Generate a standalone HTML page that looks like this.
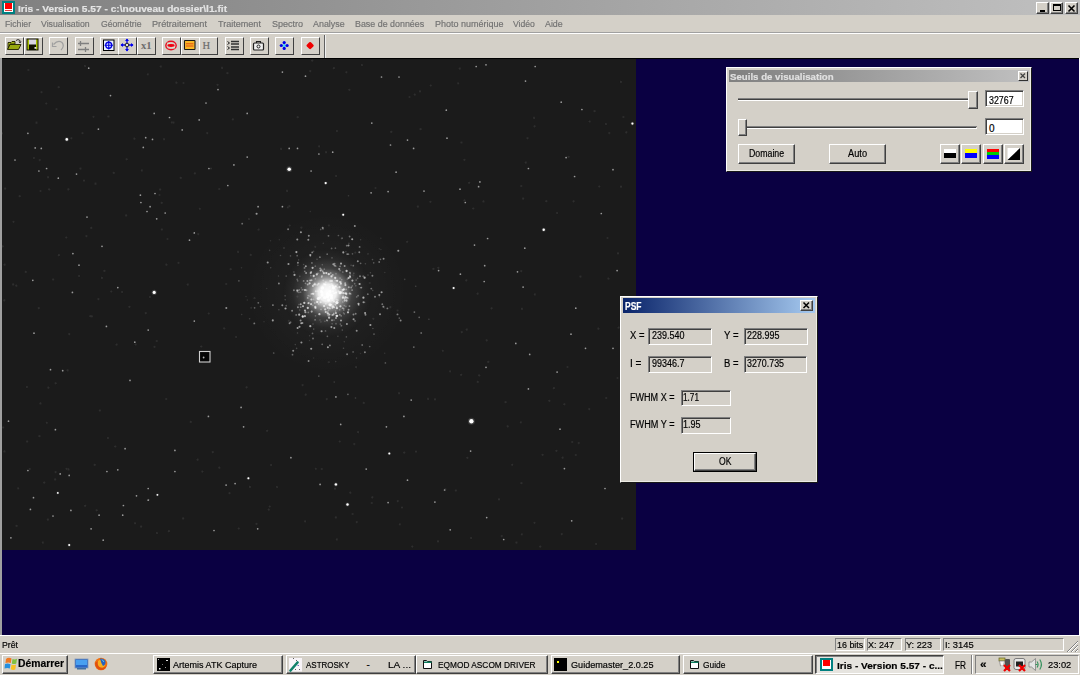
<!DOCTYPE html>
<html><head><meta charset="utf-8"><style>
*{margin:0;padding:0;box-sizing:border-box}
html,body{width:1080px;height:675px;overflow:hidden;background:#d4d0c8;font-family:"Liberation Sans",sans-serif;font-size:10px;position:relative;color:#000}
div,span,svg{position:absolute}
span{white-space:nowrap;line-height:normal;transform-origin:0 0;-webkit-text-stroke:0.18px currentColor}
.raised{background:#d4d0c8;border:1px solid;border-color:#fff #404040 #404040 #fff;box-shadow:inset -1px -1px 0 #808080}
.raised2{background:#d4d0c8;border:1px solid;border-color:#d4d0c8 #404040 #404040 #d4d0c8;box-shadow:inset 1px 1px 0 #fff,inset -1px -1px 0 #808080}
.sunken{border:1px solid;border-color:#808080 #fff #fff #808080;box-shadow:inset 1px 1px 0 #404040,inset -1px -1px 0 #d4d0c8}
.tbtn{background:#d4d0c8;border:1px solid;border-color:#fff #404040 #404040 #fff}
.dlgf{background:#d4d0c8;border:1px solid;border-color:#fff #181818 #181818 #fff;box-shadow:inset -1px -1px 0 #ecebe4}
.thin{border:1px solid;border-color:#808080 #fff #fff #808080}
</style></head><body>
<div style="left:0;top:0;width:1080px;height:15px;background:linear-gradient(to right,#808080,#c0c0c0)"></div>
<div style="left:2px;top:1px;width:13px;height:13px;background:#008080"></div>
<div style="left:4px;top:3px;width:9px;height:9px;background:#fff"></div>
<div style="left:5px;top:3px;width:7px;height:6px;background:#f00"></div>
<div style="left:5px;top:10px;width:7px;height:1px;background:#e04040"></div>
<span style="left:17.50px;top:2.86px;font-size:9.5px;font-weight:bold;color:#e4e4e4;transform:scaleX(1.070);">Iris - Version 5.57 - c:\nouveau dossier\l1.fit</span>
<div class="raised" style="left:1036px;top:2px;width:13px;height:12px"></div>
<div class="raised" style="left:1050px;top:2px;width:13px;height:12px"></div>
<div class="raised" style="left:1065px;top:2px;width:13px;height:12px"></div>
<div style="left:1040px;top:10px;width:5px;height:2px;background:#000"></div>
<div style="left:1053px;top:4px;width:8px;height:7px;border:1px solid #000;border-top-width:2px"></div>
<svg style="left:1065px;top:2px" width="13" height="12" viewBox="0 0 13 12"><path d="M3.5 3.5L9.5 9.5M9.5 3.5L3.5 9.5" stroke="#000" stroke-width="1.6"/></svg>
<span style="left:4.70px;top:18.37px;font-size:9.6px;color:#727272;transform:scaleX(0.906);">Fichier</span>
<span style="left:41.30px;top:18.37px;font-size:9.6px;color:#727272;transform:scaleX(0.907);">Visualisation</span>
<span style="left:100.80px;top:18.37px;font-size:9.6px;color:#727272;transform:scaleX(0.903);">Géométrie</span>
<span style="left:151.70px;top:18.37px;font-size:9.6px;color:#727272;transform:scaleX(0.954);">Prétraitement</span>
<span style="left:218.30px;top:18.37px;font-size:9.6px;color:#727272;transform:scaleX(0.943);">Traitement</span>
<span style="left:271.70px;top:18.37px;font-size:9.6px;color:#727272;transform:scaleX(0.940);">Spectro</span>
<span style="left:313.30px;top:18.37px;font-size:9.6px;color:#727272;transform:scaleX(0.928);">Analyse</span>
<span style="left:355.30px;top:18.37px;font-size:9.6px;color:#727272;transform:scaleX(0.926);">Base de données</span>
<span style="left:434.50px;top:18.37px;font-size:9.6px;color:#727272;transform:scaleX(0.936);">Photo numérique</span>
<span style="left:512.90px;top:18.37px;font-size:9.6px;color:#727272;transform:scaleX(0.898);">Vidéo</span>
<span style="left:544.80px;top:18.37px;font-size:9.6px;color:#727272;transform:scaleX(0.922);">Aide</span>
<div style="left:0;top:32px;width:1080px;height:1px;background:#a0a0a0"></div>
<div style="left:0;top:33px;width:1080px;height:1px;background:#fff"></div>
<div class="tbtn" style="left:5px;top:37px;width:19px;height:18px"></div>
<div class="tbtn" style="left:24px;top:37px;width:19px;height:18px"></div>
<div class="tbtn" style="left:49px;top:37px;width:19px;height:18px"></div>
<div class="tbtn" style="left:75px;top:37px;width:19px;height:18px"></div>
<div class="tbtn" style="left:100px;top:37px;width:19px;height:18px"></div>
<div class="tbtn" style="left:118px;top:37px;width:19px;height:18px"></div>
<div class="tbtn" style="left:137px;top:37px;width:19px;height:18px"></div>
<div class="tbtn" style="left:162px;top:37px;width:19px;height:18px"></div>
<div class="tbtn" style="left:181px;top:37px;width:19px;height:18px"></div>
<div class="tbtn" style="left:199px;top:37px;width:19px;height:18px"></div>
<div class="tbtn" style="left:225px;top:37px;width:19px;height:18px"></div>
<div class="tbtn" style="left:250px;top:37px;width:19px;height:18px"></div>
<div class="tbtn" style="left:275px;top:37px;width:19px;height:18px"></div>
<div class="tbtn" style="left:301px;top:37px;width:19px;height:18px"></div>
<div style="left:324px;top:35px;width:1px;height:23px;background:#606060"></div>
<div style="left:325px;top:35px;width:1px;height:23px;background:#f0f0f0"></div>
<svg style="left:5px;top:36px" width="19" height="19" viewBox="0 0 19 19"><path d="M3 6.5H6L7 5.5H10V8H5L3 13Z" fill="#a8b818" stroke="#202000" stroke-width="0.9"/><path d="M5 8.5H16L13.5 13.5H2.5Z" fill="#98a810" stroke="#202000" stroke-width="0.9"/><path d="M11 4.5Q13 2.5 15 4.5L15 6.5" fill="none" stroke="#202020" stroke-width="0.9"/><path d="M14 5.5L15 7L16 5.5" fill="none" stroke="#202020" stroke-width="0.8"/></svg>
<svg style="left:24px;top:36px" width="19" height="19" viewBox="0 0 19 19"><rect x="2.5" y="2.5" width="12" height="12" fill="#101000"/><rect x="3.5" y="3.5" width="1.5" height="10" fill="#a8c000"/><rect x="12" y="3.5" width="1.5" height="10" fill="#a8c000"/><rect x="5" y="3.5" width="7" height="5" fill="#d8d4e0"/><rect x="10.5" y="11" width="1.8" height="1.8" fill="#e8e8e8"/></svg>
<svg style="left:49px;top:36px" width="19" height="19" viewBox="0 0 19 19"><path d="M4.5 8.5Q9 3.5 13 6.5Q16 10 12 14" fill="none" stroke="#a0a0a0" stroke-width="1.2"/><path d="M3.5 6.5V10.5H7.5" fill="none" stroke="#a0a0a0" stroke-width="1.2"/></svg>
<svg style="left:75px;top:36px" width="19" height="19" viewBox="0 0 19 19"><path d="M3 7.5H14M3 13.5H14M5.5 5V10M10.5 11V16" stroke="#808080" stroke-width="1.3"/></svg>
<svg style="left:100px;top:36px" width="19" height="19" viewBox="0 0 19 19"><rect x="3.5" y="4" width="10.5" height="10.5" fill="#e8f0ff" stroke="#000" stroke-width="1"/><circle cx="8.75" cy="9.25" r="3" fill="none" stroke="#0000e0" stroke-width="1.3"/><path d="M4.5 9.25H13M8.75 5V13.5" stroke="#0000e0" stroke-width="1.1"/></svg>
<svg style="left:118px;top:36px" width="19" height="19" viewBox="0 0 19 19"><path d="M9 3V15M3 9H15" stroke="#0000f0" stroke-width="1.3"/><path d="M9 2.5L7 5H11ZM9 15.5L7 13H11ZM2.5 9L5 7V11ZM15.5 9L13 7V11Z" fill="#0000f0"/><circle cx="9" cy="9" r="1.8" fill="#e0e0e0" stroke="#202020" stroke-width="1"/></svg>
<svg style="left:137px;top:36px" width="19" height="19" viewBox="0 0 19 19"><text x="4" y="12.8" font-family="Liberation Serif" font-size="10.5" font-weight="bold" fill="#6c6c6c">x1</text></svg>
<svg style="left:162px;top:37px" width="19" height="18" viewBox="0 0 19 18"><ellipse cx="9" cy="8.5" rx="5.2" ry="4.3" fill="none" stroke="#e81020" stroke-width="1.4"/><ellipse cx="9" cy="8.5" rx="3.6" ry="1.4" fill="#f00010"/><path d="M5 6.2H8M10 10.8H13" stroke="#d8f0d8" stroke-width="1"/></svg>
<svg style="left:181px;top:36px" width="19" height="19" viewBox="0 0 19 19"><rect x="3.5" y="4.5" width="10.5" height="9" rx="0.6" fill="#f8b828" stroke="#181818" stroke-width="1.1"/><path d="M5 7.8H12.5M5 10H12.5" stroke="#e04010" stroke-width="0.9"/></svg>
<svg style="left:199px;top:36px" width="19" height="19" viewBox="0 0 19 19"><text x="3.5" y="12.8" font-family="Liberation Serif" font-size="10.5" fill="#6c6c6c" stroke="#6c6c6c" stroke-width="0.2">H</text></svg>
<svg style="left:225px;top:36px" width="19" height="19" viewBox="0 0 19 19"><path d="M2.5 5.5L4.5 7L2.5 8.5M2.5 10.5L4.5 12L2.5 13.5" fill="none" stroke="#202020" stroke-width="1"/><path d="M6 5.5H14M6 8H14M6 11H14M6 13.5H14" stroke="#303030" stroke-width="1.3"/></svg>
<svg style="left:250px;top:36px" width="19" height="19" viewBox="0 0 19 19"><rect x="3.5" y="7" width="10" height="7" rx="1" fill="#f0f0f0" stroke="#202020" stroke-width="1.2"/><path d="M6.5 7V5.5H10.5V7" fill="none" stroke="#202020" stroke-width="1.1"/><circle cx="8.5" cy="10.5" r="1.5" fill="none" stroke="#202020" stroke-width="1"/></svg>
<svg style="left:275px;top:36px" width="19" height="19" viewBox="0 0 19 19"><circle cx="9.2" cy="9.5" r="1.6" fill="#40e0f0"/><circle cx="9.2" cy="6.6" r="1.6" fill="#0000e8"/><circle cx="9.2" cy="12.4" r="1.6" fill="#0000e8"/><circle cx="6.3" cy="9.5" r="1.6" fill="#0000e8"/><circle cx="12.1" cy="9.5" r="1.6" fill="#0000e8"/></svg>
<svg style="left:301px;top:36px" width="19" height="19" viewBox="0 0 19 19"><rect x="6.2" y="6.7" width="5.8" height="5.8" rx="1.2" transform="rotate(45 9.1 9.6)" fill="#f00000"/></svg>
<div style="left:0;top:58px;width:2px;height:577px;background:#a0a0a0"></div>
<div style="left:2px;top:58px;width:1077px;height:577px;background:#0a0042"></div>
<div style="left:1079px;top:58px;width:1px;height:577px;background:#fff"></div>
<div style="left:2px;top:58px;width:1077px;height:1px;background:#000"></div>
<svg style="left:2px;top:59px" width="634" height="491" viewBox="0 0 634 491"><defs><radialGradient id="cg"><stop offset="0" stop-color="#fff" stop-opacity="1"/><stop offset="0.2" stop-color="#fff" stop-opacity="0.93"/><stop offset="0.36" stop-color="#fff" stop-opacity="0.48"/><stop offset="0.56" stop-color="#fff" stop-opacity="0.14"/><stop offset="0.8" stop-color="#fff" stop-opacity="0.03"/><stop offset="1" stop-color="#fff" stop-opacity="0"/></radialGradient><radialGradient id="cg2"><stop offset="0" stop-color="#fff" stop-opacity="0.045"/><stop offset="0.5" stop-color="#fff" stop-opacity="0.02"/><stop offset="1" stop-color="#fff" stop-opacity="0"/></radialGradient><filter id="bl" x="-5%" y="-5%" width="110%" height="110%"><feGaussianBlur stdDeviation="0.5"/></filter></defs><rect width="634" height="491" fill="#1b1b1b"/><g filter="url(#bl)"><circle cx="205.3" cy="74.1" r="1.1" fill="#2e2e2e"/><circle cx="412.7" cy="35.6" r="1.1" fill="#2e2e2e"/><circle cx="339.7" cy="179.6" r="1.1" fill="#2e2e2e"/><circle cx="36.8" cy="249.2" r="1.1" fill="#2e2e2e"/><circle cx="23.8" cy="212.9" r="1.1" fill="#2e2e2e"/><circle cx="44.3" cy="44.5" r="1.1" fill="#2e2e2e"/><circle cx="269.1" cy="406.0" r="1.1" fill="#2e2e2e"/><circle cx="78.5" cy="109.6" r="1.1" fill="#2e2e2e"/><circle cx="397.8" cy="465.3" r="1.1" fill="#2e2e2e"/><circle cx="365.9" cy="194.8" r="1.1" fill="#2e2e2e"/><circle cx="618.9" cy="22.9" r="1.1" fill="#2e2e2e"/><circle cx="544.3" cy="142.2" r="1.1" fill="#2e2e2e"/><circle cx="91.5" cy="57.8" r="1.1" fill="#2e2e2e"/><circle cx="195.6" cy="400.7" r="1.1" fill="#2e2e2e"/><circle cx="114.6" cy="285.6" r="1.1" fill="#2e2e2e"/><circle cx="405.1" cy="182.8" r="1.1" fill="#2e2e2e"/><circle cx="347.3" cy="30.8" r="1.1" fill="#2e2e2e"/><circle cx="37.8" cy="101.1" r="1.1" fill="#2e2e2e"/><circle cx="431.4" cy="209.9" r="1.1" fill="#2e2e2e"/><circle cx="199.2" cy="287.5" r="1.1" fill="#2e2e2e"/><circle cx="287.3" cy="147.2" r="1.1" fill="#2e2e2e"/><circle cx="503.6" cy="343.2" r="1.1" fill="#2e2e2e"/><circle cx="154.8" cy="282.0" r="1.1" fill="#2e2e2e"/><circle cx="333.0" cy="429.7" r="1.1" fill="#2e2e2e"/><circle cx="462.5" cy="141.4" r="1.1" fill="#2e2e2e"/><circle cx="621.4" cy="58.0" r="1.1" fill="#2e2e2e"/><circle cx="265.1" cy="371.8" r="1.1" fill="#2e2e2e"/><circle cx="96.4" cy="240.1" r="1.1" fill="#2e2e2e"/><circle cx="24.9" cy="328.1" r="1.1" fill="#2e2e2e"/><circle cx="484.7" cy="281.4" r="1.1" fill="#2e2e2e"/><circle cx="555.1" cy="154.1" r="1.1" fill="#2e2e2e"/><circle cx="440.8" cy="291.8" r="1.1" fill="#2e2e2e"/><circle cx="367.7" cy="224.0" r="1.1" fill="#2e2e2e"/><circle cx="532.5" cy="463.8" r="1.1" fill="#2e2e2e"/><circle cx="300.6" cy="326.1" r="1.1" fill="#2e2e2e"/><circle cx="38.5" cy="344.4" r="1.1" fill="#2e2e2e"/><circle cx="410.3" cy="487.6" r="1.1" fill="#2e2e2e"/><circle cx="521.1" cy="139.7" r="1.1" fill="#2e2e2e"/><circle cx="244.6" cy="328.3" r="1.1" fill="#2e2e2e"/><circle cx="14.3" cy="226.7" r="1.1" fill="#2e2e2e"/><circle cx="106.5" cy="57.5" r="1.1" fill="#2e2e2e"/><circle cx="37.4" cy="377.2" r="1.1" fill="#2e2e2e"/><circle cx="82.0" cy="121.6" r="1.1" fill="#2e2e2e"/><circle cx="247.9" cy="427.9" r="1.1" fill="#2e2e2e"/><circle cx="51.1" cy="220.6" r="1.1" fill="#2e2e2e"/><circle cx="348.3" cy="433.7" r="1.1" fill="#2e2e2e"/><circle cx="519.4" cy="424.2" r="1.1" fill="#2e2e2e"/><circle cx="176.5" cy="203.9" r="1.1" fill="#2e2e2e"/><circle cx="227.5" cy="434.1" r="1.1" fill="#2e2e2e"/><circle cx="607.2" cy="74.1" r="1.1" fill="#2e2e2e"/><circle cx="111.7" cy="113.9" r="1.1" fill="#2e2e2e"/><circle cx="147.9" cy="238.1" r="1.1" fill="#2e2e2e"/><circle cx="373.5" cy="129.0" r="1.1" fill="#2e2e2e"/><circle cx="2.6" cy="205.7" r="1.1" fill="#2e2e2e"/><circle cx="234.1" cy="278.1" r="1.1" fill="#2e2e2e"/><circle cx="604.3" cy="339.0" r="1.1" fill="#2e2e2e"/><circle cx="326.8" cy="303.2" r="1.1" fill="#2e2e2e"/><circle cx="428.7" cy="26.5" r="1.1" fill="#2e2e2e"/><circle cx="570.3" cy="383.0" r="1.1" fill="#2e2e2e"/><circle cx="554.4" cy="391.8" r="1.1" fill="#2e2e2e"/><circle cx="248.8" cy="195.9" r="1.1" fill="#2e2e2e"/><circle cx="65.6" cy="311.4" r="1.1" fill="#2e2e2e"/><circle cx="39.5" cy="33.1" r="1.1" fill="#2e2e2e"/><circle cx="132.4" cy="79.7" r="1.1" fill="#2e2e2e"/><circle cx="215.6" cy="25.8" r="1.1" fill="#2e2e2e"/><circle cx="0.1" cy="74.3" r="1.1" fill="#2e2e2e"/><circle cx="64.3" cy="178.5" r="1.1" fill="#2e2e2e"/><circle cx="16.2" cy="429.3" r="1.1" fill="#2e2e2e"/><circle cx="389.3" cy="72.9" r="1.1" fill="#2e2e2e"/><circle cx="159.9" cy="170.6" r="1.1" fill="#2e2e2e"/><circle cx="230.9" cy="60.3" r="1.1" fill="#2e2e2e"/><circle cx="538.2" cy="487.6" r="1.1" fill="#2e2e2e"/><circle cx="295.4" cy="237.6" r="1.1" fill="#2e2e2e"/><circle cx="54.5" cy="50.2" r="1.1" fill="#2e2e2e"/><circle cx="217.2" cy="130.0" r="1.1" fill="#2e2e2e"/><circle cx="525.5" cy="79.3" r="1.1" fill="#2e2e2e"/><circle cx="14.6" cy="466.9" r="1.1" fill="#2e2e2e"/><circle cx="334.9" cy="72.0" r="1.1" fill="#2e2e2e"/><circle cx="344.4" cy="13.3" r="1.1" fill="#2e2e2e"/><circle cx="334.8" cy="480.4" r="1.1" fill="#2e2e2e"/><circle cx="547.3" cy="341.8" r="1.1" fill="#2e2e2e"/><circle cx="165.5" cy="180.0" r="1.1" fill="#2e2e2e"/><circle cx="105.9" cy="379.0" r="1.1" fill="#2e2e2e"/><circle cx="337.7" cy="382.5" r="1.1" fill="#2e2e2e"/><circle cx="209.0" cy="109.5" r="1.1" fill="#2e2e2e"/><circle cx="514.5" cy="483.6" r="1.1" fill="#2e2e2e"/><circle cx="540.6" cy="395.8" r="1.1" fill="#2e2e2e"/><circle cx="518.8" cy="363.3" r="1.1" fill="#2e2e2e"/><circle cx="143.8" cy="254.2" r="1.1" fill="#2e2e2e"/><circle cx="225.4" cy="14.2" r="1.1" fill="#2e2e2e"/><circle cx="17.7" cy="137.2" r="1.1" fill="#2e2e2e"/><circle cx="164.3" cy="340.0" r="1.1" fill="#2e2e2e"/><circle cx="606.4" cy="219.6" r="1.1" fill="#2e2e2e"/><circle cx="594.1" cy="485.1" r="1.1" fill="#2e2e2e"/><circle cx="605.5" cy="179.0" r="1.1" fill="#2e2e2e"/><circle cx="139.8" cy="111.4" r="1.1" fill="#2e2e2e"/><circle cx="124.7" cy="100.3" r="1.1" fill="#2e2e2e"/><circle cx="395.7" cy="442.1" r="1.1" fill="#2e2e2e"/><circle cx="532.8" cy="235.4" r="1.1" fill="#2e2e2e"/><circle cx="414.0" cy="392.6" r="1.1" fill="#2e2e2e"/><circle cx="53.7" cy="324.3" r="1.1" fill="#2e2e2e"/><circle cx="576.8" cy="384.1" r="1.1" fill="#2e2e2e"/><circle cx="475.6" cy="234.7" r="1.1" fill="#2e2e2e"/><circle cx="113.2" cy="387.5" r="1.1" fill="#2e2e2e"/><circle cx="210.8" cy="393.2" r="1.1" fill="#2e2e2e"/><circle cx="616.0" cy="194.4" r="1.1" fill="#2e2e2e"/><circle cx="254.5" cy="464.9" r="1.1" fill="#2e2e2e"/><circle cx="459.5" cy="83.5" r="1.1" fill="#2e2e2e"/><circle cx="80.5" cy="74.2" r="1.1" fill="#2e2e2e"/><circle cx="573.7" cy="396.0" r="1.1" fill="#2e2e2e"/><circle cx="92.7" cy="405.8" r="1.1" fill="#2e2e2e"/><circle cx="621.5" cy="322.7" r="1.1" fill="#2e2e2e"/><circle cx="222.2" cy="269.4" r="1.1" fill="#2e2e2e"/><circle cx="83.0" cy="7.0" r="1.1" fill="#2e2e2e"/><circle cx="615.5" cy="319.0" r="1.1" fill="#2e2e2e"/><circle cx="333.9" cy="458.4" r="1.1" fill="#2e2e2e"/><circle cx="275.0" cy="428.0" r="1.1" fill="#2e2e2e"/><circle cx="523.8" cy="103.6" r="1.1" fill="#2e2e2e"/><circle cx="159.7" cy="143.8" r="1.1" fill="#2e2e2e"/><circle cx="152.5" cy="287.9" r="1.1" fill="#2e2e2e"/><circle cx="164.4" cy="205.7" r="1.1" fill="#2e2e2e"/><circle cx="83.1" cy="446.8" r="1.1" fill="#2e2e2e"/><circle cx="224.3" cy="225.0" r="1.1" fill="#2e2e2e"/><circle cx="369.8" cy="444.0" r="1.1" fill="#2e2e2e"/><circle cx="266.7" cy="450.6" r="1.1" fill="#2e2e2e"/><circle cx="318.0" cy="261.1" r="1.1" fill="#2e2e2e"/><circle cx="331.9" cy="9.2" r="1.1" fill="#2e2e2e"/><circle cx="279.0" cy="89.9" r="1.1" fill="#2e2e2e"/><circle cx="2.5" cy="392.4" r="1.1" fill="#2e2e2e"/><circle cx="109.3" cy="232.5" r="1.1" fill="#2e2e2e"/><circle cx="459.8" cy="273.2" r="1.1" fill="#2e2e2e"/><circle cx="206.7" cy="254.5" r="1.1" fill="#2e2e2e"/><circle cx="352.2" cy="385.1" r="1.1" fill="#2e2e2e"/><circle cx="67.3" cy="275.1" r="1.1" fill="#2e2e2e"/><circle cx="157.5" cy="136.0" r="1.1" fill="#2e2e2e"/><circle cx="489.6" cy="249.3" r="1.1" fill="#2e2e2e"/><circle cx="356.1" cy="373.2" r="1.1" fill="#2e2e2e"/><circle cx="578.5" cy="217.6" r="1.1" fill="#2e2e2e"/><circle cx="388.3" cy="248.2" r="1.1" fill="#2e2e2e"/><circle cx="324.7" cy="340.1" r="1.1" fill="#2e2e2e"/><circle cx="286.8" cy="261.8" r="1.1" fill="#2e2e2e"/><circle cx="303.1" cy="462.3" r="1.1" fill="#2e2e2e"/><circle cx="443.3" cy="430.4" r="1.1" fill="#2e2e2e"/><circle cx="597.3" cy="127.5" r="1.1" fill="#2e2e2e"/><circle cx="354.7" cy="463.1" r="1.1" fill="#2e2e2e"/><circle cx="532.6" cy="67.3" r="1.1" fill="#2e2e2e"/><circle cx="77.1" cy="217.1" r="1.1" fill="#2e2e2e"/><circle cx="46.0" cy="118.2" r="1.1" fill="#2e2e2e"/><circle cx="46.4" cy="328.7" r="1.1" fill="#2e2e2e"/><circle cx="497.0" cy="440.4" r="1.1" fill="#2e2e2e"/><circle cx="97.9" cy="351.6" r="1.1" fill="#2e2e2e"/><circle cx="418.6" cy="70.2" r="1.1" fill="#2e2e2e"/><circle cx="559.7" cy="475.1" r="1.1" fill="#2e2e2e"/><circle cx="139.2" cy="467.7" r="1.1" fill="#2e2e2e"/><circle cx="252.5" cy="239.2" r="1.1" fill="#2e2e2e"/><circle cx="627.6" cy="408.7" r="1.1" fill="#2e2e2e"/><circle cx="102.4" cy="211.9" r="1.1" fill="#2e2e2e"/><circle cx="326.9" cy="166.5" r="1.1" fill="#2e2e2e"/><circle cx="124.1" cy="156.4" r="1.1" fill="#2e2e2e"/><circle cx="457.8" cy="9.6" r="1.1" fill="#2e2e2e"/><circle cx="351.3" cy="216.3" r="1.1" fill="#2e2e2e"/><circle cx="11.5" cy="162.8" r="1.1" fill="#2e2e2e"/><circle cx="395.6" cy="251.5" r="1.1" fill="#2e2e2e"/><circle cx="40.8" cy="483.7" r="1.1" fill="#2e2e2e"/><circle cx="499.8" cy="477.1" r="1.1" fill="#2e2e2e"/><circle cx="66.4" cy="130.4" r="1.1" fill="#2e2e2e"/><circle cx="25.1" cy="382.5" r="1.1" fill="#2e2e2e"/><circle cx="171.5" cy="63.6" r="1.1" fill="#2e2e2e"/><circle cx="267.7" cy="447.5" r="1.1" fill="#2e2e2e"/><circle cx="519.2" cy="127.0" r="1.1" fill="#2e2e2e"/><circle cx="94.7" cy="451.3" r="1.1" fill="#2e2e2e"/><circle cx="361.8" cy="343.9" r="1.1" fill="#2e2e2e"/><circle cx="56.7" cy="28.2" r="1.1" fill="#2e2e2e"/><circle cx="436.3" cy="208.8" r="1.1" fill="#2e2e2e"/><circle cx="45.9" cy="460.7" r="1.1" fill="#2e2e2e"/><circle cx="402.2" cy="393.6" r="1.1" fill="#2e2e2e"/><circle cx="53.1" cy="420.4" r="1.1" fill="#2e2e2e"/><circle cx="42.2" cy="423.6" r="1.1" fill="#2e2e2e"/><circle cx="287.7" cy="166.5" r="1.1" fill="#2e2e2e"/><circle cx="350.6" cy="455.0" r="1.1" fill="#2e2e2e"/><circle cx="169.8" cy="63.4" r="1.1" fill="#2e2e2e"/><circle cx="334.1" cy="117.1" r="1.1" fill="#2e2e2e"/><circle cx="69.4" cy="79.3" r="1.1" fill="#2e2e2e"/><circle cx="31.9" cy="99.1" r="1.1" fill="#2e2e2e"/><circle cx="197.8" cy="149.8" r="1.1" fill="#2e2e2e"/><circle cx="481.5" cy="142.4" r="1.1" fill="#2e2e2e"/><circle cx="317.1" cy="87.3" r="1.1" fill="#2e2e2e"/><circle cx="220.0" cy="8.9" r="1.1" fill="#2e2e2e"/><circle cx="158.8" cy="7.5" r="1.1" fill="#2e2e2e"/><circle cx="464.8" cy="270.6" r="1.1" fill="#2e2e2e"/><circle cx="120.1" cy="233.1" r="1.1" fill="#2e2e2e"/><circle cx="592.6" cy="52.2" r="1.1" fill="#2e2e2e"/><circle cx="519.2" cy="212.2" r="1.1" fill="#2e2e2e"/><circle cx="313.8" cy="409.8" r="1.1" fill="#2e2e2e"/><circle cx="249.2" cy="248.8" r="1.1" fill="#2e2e2e"/><circle cx="436.0" cy="482.4" r="1.1" fill="#2e2e2e"/><circle cx="217.3" cy="408.7" r="1.1" fill="#2e2e2e"/><circle cx="448.1" cy="312.3" r="1.1" fill="#2e2e2e"/><circle cx="256.6" cy="170.6" r="1.1" fill="#2e2e2e"/><circle cx="34.5" cy="63.7" r="1.1" fill="#2e2e2e"/><circle cx="44.8" cy="363.8" r="1.1" fill="#2e2e2e"/><circle cx="162.0" cy="80.2" r="1.1" fill="#2e2e2e"/><circle cx="53.6" cy="413.1" r="1.1" fill="#2e2e2e"/><circle cx="551.9" cy="329.2" r="1.1" fill="#2e2e2e"/><circle cx="178.7" cy="118.9" r="1.1" fill="#2e2e2e"/><circle cx="185.8" cy="225.6" r="1.1" fill="#2e2e2e"/><circle cx="99.9" cy="218.9" r="1.1" fill="#2e2e2e"/><circle cx="166.9" cy="472.2" r="1.1" fill="#2e2e2e"/><circle cx="616.6" cy="268.6" r="1.1" fill="#2e2e2e"/><circle cx="155.0" cy="474.1" r="1.1" fill="#2e2e2e"/><circle cx="196.3" cy="175.1" r="1.1" fill="#2e2e2e"/><circle cx="0.7" cy="187.4" r="1.1" fill="#2e2e2e"/><circle cx="300.9" cy="246.9" r="1.1" fill="#2e2e2e"/><circle cx="127.4" cy="247.8" r="1.1" fill="#2e2e2e"/><circle cx="3.1" cy="129.7" r="1.1" fill="#2e2e2e"/><circle cx="56.9" cy="196.2" r="1.1" fill="#2e2e2e"/><circle cx="26.4" cy="11.0" r="1.1" fill="#2e2e2e"/><circle cx="192.9" cy="114.3" r="1.1" fill="#2e2e2e"/><circle cx="371.3" cy="259.8" r="1.1" fill="#2e2e2e"/><circle cx="475.8" cy="322.9" r="1.1" fill="#2e2e2e"/><circle cx="453.9" cy="431.6" r="1.1" fill="#2e2e2e"/><circle cx="247.0" cy="160.1" r="1.1" fill="#2e2e2e"/><circle cx="624.3" cy="73.4" r="1.1" fill="#2e2e2e"/><circle cx="459.1" cy="315.8" r="1.1" fill="#2e2e2e"/><circle cx="27.8" cy="410.1" r="1.1" fill="#2e2e2e"/><circle cx="565.5" cy="308.0" r="1.1" fill="#2e2e2e"/><circle cx="465.3" cy="398.8" r="1.1" fill="#2e2e2e"/><circle cx="88.3" cy="257.2" r="1.1" fill="#2e2e2e"/><circle cx="319.8" cy="410.0" r="1.1" fill="#2e2e2e"/><circle cx="510.2" cy="405.8" r="1.1" fill="#2e2e2e"/><circle cx="370.3" cy="438.4" r="1.1" fill="#2e2e2e"/><circle cx="433.0" cy="340.4" r="1.1" fill="#2e2e2e"/><circle cx="145.8" cy="15.3" r="1.1" fill="#2e2e2e"/><circle cx="84.4" cy="177.1" r="1.1" fill="#2e2e2e"/><circle cx="66.5" cy="410.4" r="1.1" fill="#2e2e2e"/><circle cx="354.1" cy="308.2" r="1.1" fill="#2e2e2e"/><circle cx="397.0" cy="334.2" r="1.1" fill="#2e2e2e"/><circle cx="310.2" cy="1.6" r="1.1" fill="#2e2e2e"/><circle cx="505.7" cy="367.4" r="1.1" fill="#2e2e2e"/><circle cx="318.9" cy="262.8" r="1.1" fill="#2e2e2e"/><circle cx="418.0" cy="32.4" r="1.1" fill="#2e2e2e"/><circle cx="467.1" cy="123.8" r="1.1" fill="#2e2e2e"/><circle cx="47.2" cy="130.4" r="1.1" fill="#2e2e2e"/><circle cx="462.4" cy="100.8" r="1.1" fill="#2e2e2e"/><circle cx="469.1" cy="479.1" r="1.1" fill="#2e2e2e"/><circle cx="313.2" cy="187.8" r="1.1" fill="#2e2e2e"/><circle cx="303.7" cy="335.7" r="1.1" fill="#2e2e2e"/><circle cx="486.3" cy="302.9" r="1.1" fill="#2e2e2e"/><circle cx="407.5" cy="38.0" r="1.1" fill="#2e2e2e"/><circle cx="93.5" cy="124.7" r="1.1" fill="#2e2e2e"/><circle cx="471.2" cy="149.5" r="1.1" fill="#2e2e2e"/><circle cx="360.0" cy="6.1" r="1.1" fill="#2e2e2e"/><circle cx="38.5" cy="132.0" r="1.1" fill="#2e2e2e"/><circle cx="426.0" cy="339.9" r="1.1" fill="#2e2e2e"/><circle cx="428.4" cy="142.8" r="1.1" fill="#2e2e2e"/><circle cx="327.5" cy="228.1" r="1.1" fill="#2e2e2e"/><circle cx="295.7" cy="58.2" r="1.1" fill="#2e2e2e"/><circle cx="566.6" cy="97.8" r="1.1" fill="#2e2e2e"/><circle cx="620.1" cy="459.7" r="1.1" fill="#2e2e2e"/><circle cx="11.1" cy="225.4" r="1.1" fill="#2e2e2e"/><circle cx="519.8" cy="475.3" r="1.1" fill="#2e2e2e"/><circle cx="285.0" cy="131.9" r="1.1" fill="#2e2e2e"/><circle cx="133.0" cy="464.3" r="1.1" fill="#2e2e2e"/><circle cx="133.6" cy="285.5" r="1.1" fill="#2e2e2e"/><circle cx="89.9" cy="257.3" r="1.1" fill="#2e2e2e"/><circle cx="604.0" cy="65.1" r="1.1" fill="#2e2e2e"/><circle cx="520.0" cy="249.8" r="1.1" fill="#2e2e2e"/><circle cx="562.3" cy="345.3" r="1.1" fill="#2e2e2e"/><circle cx="146.7" cy="440.8" r="1.1" fill="#2e2e2e"/><circle cx="308.2" cy="12.2" r="1.1" fill="#2e2e2e"/><circle cx="2.3" cy="241.4" r="1.1" fill="#2e2e2e"/><circle cx="285.8" cy="148.3" r="1.1" fill="#2e2e2e"/><circle cx="89.2" cy="168.9" r="1.1" fill="#2e2e2e"/><circle cx="200.4" cy="412.6" r="1.1" fill="#2e2e2e"/><circle cx="1.1" cy="368.6" r="1.1" fill="#2e2e2e"/><circle cx="532.0" cy="58.9" r="1.1" fill="#2e2e2e"/><circle cx="587.3" cy="350.1" r="1.1" fill="#2e2e2e"/><circle cx="571.6" cy="142.3" r="1.1" fill="#2e2e2e"/><circle cx="236.0" cy="192.9" r="1.1" fill="#2e2e2e"/><circle cx="633.2" cy="289.3" r="1.1" fill="#2e2e2e"/><circle cx="228.7" cy="210.2" r="1.1" fill="#2e2e2e"/><circle cx="174.4" cy="23.7" r="1.1" fill="#2e2e2e"/><circle cx="64.5" cy="409.8" r="1.1" fill="#2e2e2e"/><circle cx="181.1" cy="459.4" r="1.1" fill="#2e2e2e"/><circle cx="158.1" cy="130.5" r="1.1" fill="#2e2e2e"/><circle cx="324.0" cy="93.2" r="1.1" fill="#2e2e2e"/><circle cx="236.7" cy="469.5" r="1.1" fill="#2e2e2e"/><circle cx="560.6" cy="398.7" r="1.1" fill="#2e2e2e"/><circle cx="400.0" cy="448.5" r="1.1" fill="#2e2e2e"/><circle cx="596.4" cy="269.7" r="1.1" fill="#2e2e2e"/><circle cx="456.2" cy="24.3" r="1.1" fill="#2e2e2e"/><circle cx="464.3" cy="221.4" r="1.1" fill="#2e2e2e"/><circle cx="477.2" cy="316.4" r="1.1" fill="#2e2e2e"/><circle cx="181.5" cy="24.0" r="1.1" fill="#2e2e2e"/><circle cx="587.6" cy="62.5" r="1.1" fill="#2e2e2e"/><circle cx="299.4" cy="168.7" r="1.1" fill="#2e2e2e"/><circle cx="188.8" cy="362.9" r="1.1" fill="#2e2e2e"/><circle cx="619.0" cy="127.7" r="1.1" fill="#2e2e2e"/><circle cx="415.9" cy="147.7" r="1.1" fill="#2e2e2e"/><circle cx="353.3" cy="193.6" r="1.1" fill="#2e2e2e"/><circle cx="325.4" cy="234" r="80" fill="url(#cg2)"/><circle cx="325.4" cy="234" r="44" fill="url(#cg)"/><circle cx="326.6" cy="236.0" r="1.6" fill="#fff" fill-opacity="0.85"/><circle cx="327.8" cy="232.4" r="1.6" fill="#fff" fill-opacity="0.85"/><circle cx="326.7" cy="240.8" r="1.6" fill="#fff" fill-opacity="0.85"/><circle cx="338.1" cy="233.7" r="1.6" fill="#fff" fill-opacity="0.85"/><circle cx="329.4" cy="238.8" r="1.6" fill="#fff" fill-opacity="0.85"/><circle cx="327.7" cy="235.5" r="1.6" fill="#fff" fill-opacity="0.85"/><circle cx="329.4" cy="236.6" r="1.6" fill="#fff" fill-opacity="0.85"/><circle cx="325.2" cy="237.3" r="1.6" fill="#fff" fill-opacity="0.85"/><circle cx="331.5" cy="228.8" r="1.6" fill="#fff" fill-opacity="0.85"/><circle cx="316.4" cy="239.5" r="1.6" fill="#fff" fill-opacity="0.85"/><circle cx="319.7" cy="233.1" r="1.6" fill="#fff" fill-opacity="0.85"/><circle cx="322.6" cy="238.5" r="1.6" fill="#fff" fill-opacity="0.85"/><circle cx="325.3" cy="234.9" r="1.6" fill="#fff" fill-opacity="0.85"/><circle cx="334.9" cy="243.6" r="1.6" fill="#fff" fill-opacity="0.85"/><circle cx="320.6" cy="228.9" r="1.6" fill="#fff" fill-opacity="0.85"/><circle cx="328.0" cy="245.8" r="1.6" fill="#fff" fill-opacity="0.85"/><circle cx="325.4" cy="237.8" r="1.6" fill="#fff" fill-opacity="0.85"/><circle cx="320.1" cy="235.9" r="1.6" fill="#fff" fill-opacity="0.85"/><circle cx="378.8" cy="179.2" r="0.75" fill="#fff" fill-opacity="0.10"/><circle cx="323.2" cy="225.6" r="1.13" fill="#fff" fill-opacity="0.69"/><circle cx="297.8" cy="217.2" r="0.81" fill="#fff" fill-opacity="0.20"/><circle cx="350.4" cy="221.6" r="1.06" fill="#fff" fill-opacity="0.58"/><circle cx="402.7" cy="220.4" r="0.79" fill="#fff" fill-opacity="0.16"/><circle cx="333.4" cy="245.7" r="0.97" fill="#fff" fill-opacity="0.45"/><circle cx="370.4" cy="216.7" r="0.97" fill="#fff" fill-opacity="0.44"/><circle cx="329.6" cy="189.4" r="0.88" fill="#fff" fill-opacity="0.30"/><circle cx="361.5" cy="243.2" r="1.02" fill="#fff" fill-opacity="0.52"/><circle cx="343.2" cy="224.2" r="1.00" fill="#fff" fill-opacity="0.49"/><circle cx="341.8" cy="251.0" r="0.87" fill="#fff" fill-opacity="0.29"/><circle cx="311.5" cy="192.4" r="0.80" fill="#fff" fill-opacity="0.17"/><circle cx="313.8" cy="232.2" r="1.00" fill="#fff" fill-opacity="0.49"/><circle cx="330.0" cy="261.3" r="0.97" fill="#fff" fill-opacity="0.44"/><circle cx="323.5" cy="239.5" r="0.97" fill="#fff" fill-opacity="0.44"/><circle cx="358.6" cy="204.3" r="0.89" fill="#fff" fill-opacity="0.31"/><circle cx="325.8" cy="254.4" r="1.14" fill="#fff" fill-opacity="0.70"/><circle cx="307.5" cy="281.5" r="0.77" fill="#fff" fill-opacity="0.13"/><circle cx="309.9" cy="203.9" r="0.89" fill="#fff" fill-opacity="0.33"/><circle cx="314.8" cy="215.4" r="1.12" fill="#fff" fill-opacity="0.67"/><circle cx="344.9" cy="238.3" r="0.90" fill="#fff" fill-opacity="0.34"/><circle cx="313.3" cy="207.2" r="0.85" fill="#fff" fill-opacity="0.25"/><circle cx="321.0" cy="169.8" r="0.86" fill="#fff" fill-opacity="0.28"/><circle cx="344.1" cy="230.4" r="0.90" fill="#fff" fill-opacity="0.33"/><circle cx="333.7" cy="302.6" r="0.78" fill="#fff" fill-opacity="0.15"/><circle cx="309.2" cy="289.8" r="1.05" fill="#fff" fill-opacity="0.56"/><circle cx="338.3" cy="265.1" r="0.84" fill="#fff" fill-opacity="0.24"/><circle cx="310.6" cy="208.8" r="1.11" fill="#fff" fill-opacity="0.66"/><circle cx="312.8" cy="244.0" r="0.88" fill="#fff" fill-opacity="0.30"/><circle cx="340.5" cy="239.1" r="0.85" fill="#fff" fill-opacity="0.26"/><circle cx="347.9" cy="217.3" r="1.08" fill="#fff" fill-opacity="0.62"/><circle cx="379.6" cy="233.2" r="1.05" fill="#fff" fill-opacity="0.56"/><circle cx="335.2" cy="256.8" r="1.11" fill="#fff" fill-opacity="0.67"/><circle cx="380.3" cy="245.2" r="0.93" fill="#fff" fill-opacity="0.38"/><circle cx="306.3" cy="253.4" r="0.88" fill="#fff" fill-opacity="0.31"/><circle cx="342.7" cy="234.3" r="0.89" fill="#fff" fill-opacity="0.32"/><circle cx="350.3" cy="226.9" r="0.84" fill="#fff" fill-opacity="0.24"/><circle cx="313.5" cy="249.0" r="1.08" fill="#fff" fill-opacity="0.61"/><circle cx="262.0" cy="262.7" r="0.75" fill="#fff" fill-opacity="0.11"/><circle cx="302.9" cy="257.2" r="1.09" fill="#fff" fill-opacity="0.63"/><circle cx="313.3" cy="247.9" r="1.11" fill="#fff" fill-opacity="0.66"/><circle cx="318.2" cy="238.5" r="1.10" fill="#fff" fill-opacity="0.64"/><circle cx="382.5" cy="248.9" r="0.75" fill="#fff" fill-opacity="0.11"/><circle cx="335.3" cy="228.6" r="0.90" fill="#fff" fill-opacity="0.33"/><circle cx="370.5" cy="200.6" r="0.82" fill="#fff" fill-opacity="0.21"/><circle cx="346.8" cy="228.2" r="0.99" fill="#fff" fill-opacity="0.47"/><circle cx="320.9" cy="212.8" r="0.89" fill="#fff" fill-opacity="0.32"/><circle cx="347.7" cy="234.5" r="1.04" fill="#fff" fill-opacity="0.55"/><circle cx="254.6" cy="154.8" r="1.04" fill="#fff" fill-opacity="0.55"/><circle cx="326.2" cy="241.8" r="0.97" fill="#fff" fill-opacity="0.44"/><circle cx="325.2" cy="261.6" r="0.91" fill="#fff" fill-opacity="0.35"/><circle cx="355.6" cy="219.4" r="0.83" fill="#fff" fill-opacity="0.23"/><circle cx="320.7" cy="168.7" r="0.99" fill="#fff" fill-opacity="0.47"/><circle cx="278.5" cy="196.5" r="0.81" fill="#fff" fill-opacity="0.19"/><circle cx="309.7" cy="252.6" r="1.05" fill="#fff" fill-opacity="0.56"/><circle cx="329.4" cy="245.7" r="1.06" fill="#fff" fill-opacity="0.59"/><circle cx="344.7" cy="242.3" r="0.84" fill="#fff" fill-opacity="0.24"/><circle cx="308.3" cy="267.2" r="1.11" fill="#fff" fill-opacity="0.65"/><circle cx="413.7" cy="227.2" r="0.79" fill="#fff" fill-opacity="0.17"/><circle cx="335.8" cy="241.2" r="0.97" fill="#fff" fill-opacity="0.44"/><circle cx="276.9" cy="250.8" r="0.81" fill="#fff" fill-opacity="0.19"/><circle cx="304.1" cy="214.0" r="0.99" fill="#fff" fill-opacity="0.48"/><circle cx="357.6" cy="187.9" r="0.93" fill="#fff" fill-opacity="0.38"/><circle cx="333.4" cy="221.5" r="0.90" fill="#fff" fill-opacity="0.34"/><circle cx="298.6" cy="261.5" r="1.00" fill="#fff" fill-opacity="0.49"/><circle cx="325.7" cy="252.7" r="0.88" fill="#fff" fill-opacity="0.30"/><circle cx="337.7" cy="223.0" r="0.99" fill="#fff" fill-opacity="0.47"/><circle cx="305.8" cy="249.0" r="1.14" fill="#fff" fill-opacity="0.71"/><circle cx="329.4" cy="268.1" r="1.04" fill="#fff" fill-opacity="0.55"/><circle cx="370.7" cy="231.4" r="0.79" fill="#fff" fill-opacity="0.17"/><circle cx="339.0" cy="204.6" r="1.05" fill="#fff" fill-opacity="0.57"/><circle cx="426.9" cy="260.3" r="0.80" fill="#fff" fill-opacity="0.18"/><circle cx="330.8" cy="247.7" r="1.15" fill="#fff" fill-opacity="0.73"/><circle cx="361.2" cy="217.2" r="0.87" fill="#fff" fill-opacity="0.28"/><circle cx="247.6" cy="259.8" r="0.79" fill="#fff" fill-opacity="0.16"/><circle cx="382.8" cy="213.6" r="0.76" fill="#fff" fill-opacity="0.12"/><circle cx="295.9" cy="206.3" r="0.83" fill="#fff" fill-opacity="0.22"/><circle cx="342.3" cy="254.8" r="0.85" fill="#fff" fill-opacity="0.26"/><circle cx="308.1" cy="221.5" r="1.00" fill="#fff" fill-opacity="0.49"/><circle cx="344.3" cy="235.4" r="0.90" fill="#fff" fill-opacity="0.34"/><circle cx="344.4" cy="277.9" r="0.83" fill="#fff" fill-opacity="0.23"/><circle cx="330.7" cy="215.9" r="0.97" fill="#fff" fill-opacity="0.44"/><circle cx="334.5" cy="240.7" r="0.94" fill="#fff" fill-opacity="0.39"/><circle cx="301.6" cy="205.5" r="0.81" fill="#fff" fill-opacity="0.19"/><circle cx="319.7" cy="218.0" r="0.93" fill="#fff" fill-opacity="0.38"/><circle cx="317.4" cy="255.2" r="1.13" fill="#fff" fill-opacity="0.69"/><circle cx="303.5" cy="224.3" r="0.90" fill="#fff" fill-opacity="0.33"/><circle cx="344.6" cy="212.0" r="1.13" fill="#fff" fill-opacity="0.70"/><circle cx="334.0" cy="259.1" r="1.02" fill="#fff" fill-opacity="0.52"/><circle cx="344.3" cy="234.7" r="1.11" fill="#fff" fill-opacity="0.66"/><circle cx="338.1" cy="207.3" r="0.90" fill="#fff" fill-opacity="0.33"/><circle cx="239.7" cy="255.5" r="0.77" fill="#fff" fill-opacity="0.13"/><circle cx="319.2" cy="231.9" r="1.03" fill="#fff" fill-opacity="0.54"/><circle cx="411.8" cy="288.1" r="0.90" fill="#fff" fill-opacity="0.34"/><circle cx="298.6" cy="233.2" r="0.84" fill="#fff" fill-opacity="0.24"/><circle cx="303.0" cy="231.0" r="1.11" fill="#fff" fill-opacity="0.67"/><circle cx="311.3" cy="234.8" r="1.08" fill="#fff" fill-opacity="0.61"/><circle cx="338.4" cy="247.3" r="1.13" fill="#fff" fill-opacity="0.69"/><circle cx="356.5" cy="244.8" r="1.09" fill="#fff" fill-opacity="0.63"/><circle cx="348.2" cy="218.3" r="0.98" fill="#fff" fill-opacity="0.45"/><circle cx="362.9" cy="293.3" r="0.97" fill="#fff" fill-opacity="0.44"/><circle cx="309.1" cy="245.2" r="1.09" fill="#fff" fill-opacity="0.62"/><circle cx="354.5" cy="299.1" r="0.78" fill="#fff" fill-opacity="0.15"/><circle cx="297.3" cy="230.8" r="0.90" fill="#fff" fill-opacity="0.33"/><circle cx="325.7" cy="248.9" r="1.05" fill="#fff" fill-opacity="0.56"/><circle cx="417.2" cy="258.3" r="0.88" fill="#fff" fill-opacity="0.31"/><circle cx="381.4" cy="247.7" r="1.00" fill="#fff" fill-opacity="0.48"/><circle cx="313.5" cy="225.4" r="0.98" fill="#fff" fill-opacity="0.46"/><circle cx="310.5" cy="274.4" r="0.87" fill="#fff" fill-opacity="0.29"/><circle cx="290.1" cy="251.8" r="0.96" fill="#fff" fill-opacity="0.43"/><circle cx="296.9" cy="245.6" r="0.82" fill="#fff" fill-opacity="0.20"/><circle cx="283.1" cy="236.8" r="0.83" fill="#fff" fill-opacity="0.22"/><circle cx="336.4" cy="176.5" r="0.85" fill="#fff" fill-opacity="0.26"/><circle cx="307.9" cy="237.0" r="0.86" fill="#fff" fill-opacity="0.26"/><circle cx="311.6" cy="240.4" r="0.86" fill="#fff" fill-opacity="0.27"/><circle cx="294.9" cy="232.0" r="0.82" fill="#fff" fill-opacity="0.21"/><circle cx="363.5" cy="255.7" r="0.98" fill="#fff" fill-opacity="0.46"/><circle cx="264.7" cy="229.6" r="0.75" fill="#fff" fill-opacity="0.11"/><circle cx="300.8" cy="257.7" r="1.10" fill="#fff" fill-opacity="0.64"/><circle cx="335.1" cy="221.8" r="1.16" fill="#fff" fill-opacity="0.74"/><circle cx="346.9" cy="184.4" r="0.79" fill="#fff" fill-opacity="0.16"/><circle cx="357.6" cy="225.0" r="1.09" fill="#fff" fill-opacity="0.62"/><circle cx="329.5" cy="217.4" r="1.13" fill="#fff" fill-opacity="0.69"/><circle cx="318.6" cy="243.2" r="1.07" fill="#fff" fill-opacity="0.59"/><circle cx="338.7" cy="223.9" r="0.89" fill="#fff" fill-opacity="0.32"/><circle cx="367.7" cy="287.5" r="0.86" fill="#fff" fill-opacity="0.27"/><circle cx="353.5" cy="339.0" r="0.79" fill="#fff" fill-opacity="0.17"/><circle cx="311.0" cy="265.1" r="0.81" fill="#fff" fill-opacity="0.19"/><circle cx="334.9" cy="249.2" r="1.13" fill="#fff" fill-opacity="0.69"/><circle cx="363.4" cy="204.7" r="0.80" fill="#fff" fill-opacity="0.18"/><circle cx="372.0" cy="275.1" r="0.87" fill="#fff" fill-opacity="0.29"/><circle cx="297.5" cy="267.8" r="1.04" fill="#fff" fill-opacity="0.56"/><circle cx="292.5" cy="215.9" r="1.06" fill="#fff" fill-opacity="0.58"/><circle cx="339.3" cy="233.4" r="1.01" fill="#fff" fill-opacity="0.51"/><circle cx="333.7" cy="207.2" r="0.86" fill="#fff" fill-opacity="0.28"/><circle cx="300.4" cy="264.1" r="1.01" fill="#fff" fill-opacity="0.50"/><circle cx="339.0" cy="261.4" r="1.02" fill="#fff" fill-opacity="0.52"/><circle cx="329.7" cy="224.8" r="0.90" fill="#fff" fill-opacity="0.34"/><circle cx="369.3" cy="229.6" r="0.93" fill="#fff" fill-opacity="0.38"/><circle cx="307.6" cy="276.8" r="0.78" fill="#fff" fill-opacity="0.15"/><circle cx="330.6" cy="241.2" r="1.02" fill="#fff" fill-opacity="0.52"/><circle cx="295.5" cy="231.6" r="1.08" fill="#fff" fill-opacity="0.62"/><circle cx="327.6" cy="249.2" r="1.02" fill="#fff" fill-opacity="0.51"/><circle cx="333.0" cy="234.1" r="0.93" fill="#fff" fill-opacity="0.39"/><circle cx="316.7" cy="244.9" r="0.89" fill="#fff" fill-opacity="0.31"/><circle cx="291.9" cy="213.0" r="0.83" fill="#fff" fill-opacity="0.22"/><circle cx="283.2" cy="240.7" r="0.80" fill="#fff" fill-opacity="0.18"/><circle cx="337.7" cy="250.8" r="0.85" fill="#fff" fill-opacity="0.25"/><circle cx="355.8" cy="202.2" r="1.00" fill="#fff" fill-opacity="0.49"/><circle cx="322.9" cy="262.3" r="0.82" fill="#fff" fill-opacity="0.21"/><circle cx="284.2" cy="217.0" r="0.85" fill="#fff" fill-opacity="0.26"/><circle cx="283.5" cy="249.5" r="1.07" fill="#fff" fill-opacity="0.60"/><circle cx="325.9" cy="288.3" r="1.03" fill="#fff" fill-opacity="0.54"/><circle cx="315.8" cy="232.1" r="0.94" fill="#fff" fill-opacity="0.40"/><circle cx="344.5" cy="241.4" r="1.06" fill="#fff" fill-opacity="0.58"/><circle cx="319.5" cy="232.1" r="1.16" fill="#fff" fill-opacity="0.74"/><circle cx="330.4" cy="249.1" r="1.00" fill="#fff" fill-opacity="0.49"/><circle cx="303.8" cy="207.3" r="1.04" fill="#fff" fill-opacity="0.55"/><circle cx="319.0" cy="250.3" r="0.90" fill="#fff" fill-opacity="0.33"/><circle cx="333.2" cy="227.5" r="1.08" fill="#fff" fill-opacity="0.61"/><circle cx="377.3" cy="236.1" r="1.01" fill="#fff" fill-opacity="0.51"/><circle cx="270.9" cy="246.1" r="0.96" fill="#fff" fill-opacity="0.43"/><circle cx="330.1" cy="264.8" r="0.83" fill="#fff" fill-opacity="0.22"/><circle cx="345.1" cy="238.9" r="0.90" fill="#fff" fill-opacity="0.33"/><circle cx="306.3" cy="180.8" r="1.00" fill="#fff" fill-opacity="0.49"/><circle cx="320.2" cy="285.3" r="0.90" fill="#fff" fill-opacity="0.33"/><circle cx="332.6" cy="204.6" r="0.94" fill="#fff" fill-opacity="0.39"/><circle cx="311.7" cy="217.0" r="1.13" fill="#fff" fill-opacity="0.70"/><circle cx="339.7" cy="220.6" r="0.84" fill="#fff" fill-opacity="0.24"/><circle cx="327.3" cy="255.5" r="1.04" fill="#fff" fill-opacity="0.55"/><circle cx="299.4" cy="283.6" r="1.02" fill="#fff" fill-opacity="0.52"/><circle cx="327.1" cy="258.7" r="1.10" fill="#fff" fill-opacity="0.65"/><circle cx="310.2" cy="193.4" r="0.96" fill="#fff" fill-opacity="0.42"/><circle cx="342.6" cy="206.9" r="1.00" fill="#fff" fill-opacity="0.48"/><circle cx="252.3" cy="264.4" r="0.94" fill="#fff" fill-opacity="0.40"/><circle cx="311.7" cy="270.1" r="0.83" fill="#fff" fill-opacity="0.22"/><circle cx="363.1" cy="254.0" r="1.06" fill="#fff" fill-opacity="0.59"/><circle cx="341.2" cy="236.7" r="0.86" fill="#fff" fill-opacity="0.27"/><circle cx="341.5" cy="253.9" r="0.83" fill="#fff" fill-opacity="0.22"/><circle cx="322.0" cy="225.0" r="1.02" fill="#fff" fill-opacity="0.52"/><circle cx="321.3" cy="184.3" r="0.78" fill="#fff" fill-opacity="0.14"/><circle cx="299.2" cy="264.3" r="1.03" fill="#fff" fill-opacity="0.53"/><circle cx="378.9" cy="190.4" r="0.76" fill="#fff" fill-opacity="0.11"/><circle cx="396.3" cy="191.7" r="1.04" fill="#fff" fill-opacity="0.55"/><circle cx="329.3" cy="247.5" r="0.87" fill="#fff" fill-opacity="0.28"/><circle cx="330.6" cy="226.7" r="1.10" fill="#fff" fill-opacity="0.64"/><circle cx="345.2" cy="195.1" r="0.94" fill="#fff" fill-opacity="0.40"/><circle cx="343.9" cy="247.4" r="0.84" fill="#fff" fill-opacity="0.25"/><circle cx="341.5" cy="289.3" r="0.81" fill="#fff" fill-opacity="0.20"/><circle cx="354.7" cy="237.9" r="0.86" fill="#fff" fill-opacity="0.27"/><circle cx="320.6" cy="211.9" r="0.90" fill="#fff" fill-opacity="0.34"/><circle cx="349.2" cy="228.5" r="0.94" fill="#fff" fill-opacity="0.40"/><circle cx="268.5" cy="181.7" r="0.75" fill="#fff" fill-opacity="0.10"/><circle cx="298.7" cy="245.3" r="1.03" fill="#fff" fill-opacity="0.54"/><circle cx="318.2" cy="209.4" r="0.95" fill="#fff" fill-opacity="0.41"/><circle cx="338.1" cy="219.1" r="0.85" fill="#fff" fill-opacity="0.26"/><circle cx="358.5" cy="294.6" r="0.75" fill="#fff" fill-opacity="0.10"/><circle cx="326.8" cy="215.2" r="1.15" fill="#fff" fill-opacity="0.72"/><circle cx="321.1" cy="234.2" r="0.98" fill="#fff" fill-opacity="0.46"/><circle cx="351.1" cy="292.9" r="0.86" fill="#fff" fill-opacity="0.27"/><circle cx="338.0" cy="211.6" r="0.87" fill="#fff" fill-opacity="0.29"/><circle cx="330.4" cy="256.1" r="1.02" fill="#fff" fill-opacity="0.52"/><circle cx="351.5" cy="255.5" r="0.97" fill="#fff" fill-opacity="0.44"/><circle cx="328.3" cy="221.9" r="1.04" fill="#fff" fill-opacity="0.55"/><circle cx="282.0" cy="189.0" r="0.82" fill="#fff" fill-opacity="0.20"/><circle cx="303.0" cy="251.5" r="1.09" fill="#fff" fill-opacity="0.62"/><circle cx="335.2" cy="225.7" r="0.86" fill="#fff" fill-opacity="0.27"/><circle cx="323.8" cy="253.0" r="1.11" fill="#fff" fill-opacity="0.66"/><circle cx="300.7" cy="257.4" r="1.07" fill="#fff" fill-opacity="0.60"/><circle cx="305.7" cy="238.9" r="0.96" fill="#fff" fill-opacity="0.43"/><circle cx="326.5" cy="176.8" r="0.92" fill="#fff" fill-opacity="0.36"/><circle cx="313.5" cy="256.8" r="0.85" fill="#fff" fill-opacity="0.25"/><circle cx="286.1" cy="170.2" r="0.95" fill="#fff" fill-opacity="0.41"/><circle cx="309.4" cy="240.5" r="1.06" fill="#fff" fill-opacity="0.58"/><circle cx="353.0" cy="261.9" r="0.90" fill="#fff" fill-opacity="0.33"/><circle cx="332.2" cy="323.1" r="0.78" fill="#fff" fill-opacity="0.14"/><circle cx="318.6" cy="211.5" r="1.08" fill="#fff" fill-opacity="0.61"/><circle cx="334.6" cy="247.7" r="0.89" fill="#fff" fill-opacity="0.31"/><circle cx="300.9" cy="230.6" r="0.85" fill="#fff" fill-opacity="0.26"/><circle cx="334.6" cy="257.0" r="1.13" fill="#fff" fill-opacity="0.70"/><circle cx="368.4" cy="266.0" r="1.06" fill="#fff" fill-opacity="0.58"/><circle cx="315.2" cy="243.1" r="1.16" fill="#fff" fill-opacity="0.74"/><circle cx="318.7" cy="170.4" r="0.84" fill="#fff" fill-opacity="0.24"/><circle cx="313.4" cy="219.8" r="0.85" fill="#fff" fill-opacity="0.26"/><circle cx="310.8" cy="246.3" r="0.84" fill="#fff" fill-opacity="0.25"/><circle cx="332.6" cy="206.6" r="1.00" fill="#fff" fill-opacity="0.49"/><circle cx="302.5" cy="208.9" r="0.91" fill="#fff" fill-opacity="0.35"/><circle cx="312.8" cy="224.4" r="0.93" fill="#fff" fill-opacity="0.38"/><circle cx="371.7" cy="203.8" r="0.85" fill="#fff" fill-opacity="0.25"/><circle cx="325.2" cy="195.2" r="0.88" fill="#fff" fill-opacity="0.31"/><circle cx="321.9" cy="214.2" r="1.10" fill="#fff" fill-opacity="0.64"/><circle cx="306.8" cy="176.7" r="1.00" fill="#fff" fill-opacity="0.49"/><circle cx="295.2" cy="196.7" r="0.87" fill="#fff" fill-opacity="0.29"/><circle cx="308.8" cy="216.7" r="0.84" fill="#fff" fill-opacity="0.24"/><circle cx="331.3" cy="205.2" r="1.01" fill="#fff" fill-opacity="0.50"/><circle cx="325.4" cy="277.3" r="0.87" fill="#fff" fill-opacity="0.29"/><circle cx="302.8" cy="212.3" r="0.90" fill="#fff" fill-opacity="0.33"/><circle cx="368.4" cy="213.8" r="0.80" fill="#fff" fill-opacity="0.18"/><circle cx="333.4" cy="189.2" r="0.86" fill="#fff" fill-opacity="0.27"/><circle cx="358.3" cy="228.7" r="0.81" fill="#fff" fill-opacity="0.20"/><circle cx="344.9" cy="265.1" r="1.02" fill="#fff" fill-opacity="0.52"/><circle cx="353.7" cy="254.8" r="0.94" fill="#fff" fill-opacity="0.40"/><circle cx="317.9" cy="198.2" r="0.92" fill="#fff" fill-opacity="0.36"/><circle cx="346.4" cy="195.2" r="0.90" fill="#fff" fill-opacity="0.34"/><circle cx="352.7" cy="224.7" r="0.85" fill="#fff" fill-opacity="0.26"/><circle cx="287.6" cy="264.3" r="0.99" fill="#fff" fill-opacity="0.47"/><circle cx="340.2" cy="232.6" r="0.92" fill="#fff" fill-opacity="0.36"/><circle cx="323.8" cy="244.7" r="0.94" fill="#fff" fill-opacity="0.40"/><circle cx="319.9" cy="237.1" r="0.96" fill="#fff" fill-opacity="0.42"/><circle cx="295.5" cy="274.0" r="0.82" fill="#fff" fill-opacity="0.20"/><circle cx="324.3" cy="214.1" r="1.13" fill="#fff" fill-opacity="0.69"/><circle cx="332.3" cy="269.0" r="1.03" fill="#fff" fill-opacity="0.54"/><circle cx="332.0" cy="261.1" r="0.84" fill="#fff" fill-opacity="0.24"/><circle cx="347.6" cy="177.5" r="0.91" fill="#fff" fill-opacity="0.35"/><circle cx="295.7" cy="221.8" r="0.85" fill="#fff" fill-opacity="0.25"/><circle cx="308.7" cy="214.1" r="1.06" fill="#fff" fill-opacity="0.58"/><circle cx="258.5" cy="247.6" r="0.80" fill="#fff" fill-opacity="0.18"/><circle cx="351.6" cy="260.2" r="1.04" fill="#fff" fill-opacity="0.55"/><circle cx="340.8" cy="213.0" r="0.87" fill="#fff" fill-opacity="0.29"/><circle cx="324.8" cy="261.1" r="0.91" fill="#fff" fill-opacity="0.35"/><circle cx="343.5" cy="234.3" r="1.04" fill="#fff" fill-opacity="0.55"/><circle cx="326.1" cy="256.5" r="0.89" fill="#fff" fill-opacity="0.31"/><circle cx="295.9" cy="248.2" r="0.97" fill="#fff" fill-opacity="0.44"/><circle cx="295.6" cy="269.0" r="1.06" fill="#fff" fill-opacity="0.59"/><circle cx="398.6" cy="261.4" r="0.99" fill="#fff" fill-opacity="0.47"/><circle cx="346.5" cy="136.7" r="0.77" fill="#fff" fill-opacity="0.13"/><circle cx="277.3" cy="180.7" r="0.75" fill="#fff" fill-opacity="0.10"/><circle cx="331.1" cy="232.2" r="1.04" fill="#fff" fill-opacity="0.55"/><circle cx="342.3" cy="246.6" r="0.85" fill="#fff" fill-opacity="0.26"/><circle cx="328.7" cy="214.0" r="0.90" fill="#fff" fill-opacity="0.34"/><circle cx="338.9" cy="224.7" r="1.07" fill="#fff" fill-opacity="0.60"/><circle cx="338.7" cy="223.1" r="1.00" fill="#fff" fill-opacity="0.48"/><circle cx="295.3" cy="180.4" r="1.02" fill="#fff" fill-opacity="0.51"/><circle cx="358.6" cy="180.8" r="0.78" fill="#fff" fill-opacity="0.14"/><circle cx="276.9" cy="224.5" r="0.98" fill="#fff" fill-opacity="0.45"/><circle cx="347.9" cy="213.6" r="0.95" fill="#fff" fill-opacity="0.41"/><circle cx="327.6" cy="255.7" r="0.85" fill="#fff" fill-opacity="0.26"/><circle cx="356.7" cy="246.0" r="0.91" fill="#fff" fill-opacity="0.35"/><circle cx="309.4" cy="234.9" r="0.96" fill="#fff" fill-opacity="0.43"/><circle cx="349.1" cy="206.3" r="0.80" fill="#fff" fill-opacity="0.18"/><circle cx="252.6" cy="248.8" r="0.88" fill="#fff" fill-opacity="0.31"/><circle cx="350.5" cy="194.8" r="0.85" fill="#fff" fill-opacity="0.26"/><circle cx="353.8" cy="226.8" r="0.83" fill="#fff" fill-opacity="0.22"/><circle cx="296.6" cy="200.9" r="0.79" fill="#fff" fill-opacity="0.16"/><circle cx="308.3" cy="196.1" r="1.07" fill="#fff" fill-opacity="0.60"/><circle cx="350.1" cy="231.1" r="0.94" fill="#fff" fill-opacity="0.40"/><circle cx="351.8" cy="214.2" r="0.81" fill="#fff" fill-opacity="0.20"/><circle cx="288.5" cy="196.9" r="0.83" fill="#fff" fill-opacity="0.22"/><circle cx="271.7" cy="294.0" r="0.85" fill="#fff" fill-opacity="0.26"/><circle cx="330.0" cy="198.8" r="0.84" fill="#fff" fill-opacity="0.23"/><circle cx="298.7" cy="248.1" r="0.95" fill="#fff" fill-opacity="0.41"/><circle cx="306.6" cy="302.1" r="0.99" fill="#fff" fill-opacity="0.47"/><circle cx="296.9" cy="233.3" r="0.87" fill="#fff" fill-opacity="0.28"/><circle cx="359.3" cy="228.6" r="0.97" fill="#fff" fill-opacity="0.45"/><circle cx="294.6" cy="289.4" r="0.81" fill="#fff" fill-opacity="0.19"/><circle cx="305.4" cy="221.9" r="0.99" fill="#fff" fill-opacity="0.48"/><circle cx="385.4" cy="249.4" r="0.94" fill="#fff" fill-opacity="0.40"/><circle cx="239.5" cy="208.8" r="0.75" fill="#fff" fill-opacity="0.11"/><circle cx="348.8" cy="234.9" r="0.86" fill="#fff" fill-opacity="0.27"/><circle cx="240.2" cy="164.7" r="0.92" fill="#fff" fill-opacity="0.36"/><circle cx="378.4" cy="200.3" r="0.90" fill="#fff" fill-opacity="0.33"/><circle cx="295.9" cy="203.8" r="0.97" fill="#fff" fill-opacity="0.45"/><circle cx="308.4" cy="197.2" r="0.82" fill="#fff" fill-opacity="0.22"/><circle cx="280.3" cy="246.2" r="0.99" fill="#fff" fill-opacity="0.47"/><circle cx="331.1" cy="246.4" r="0.86" fill="#fff" fill-opacity="0.27"/><circle cx="377.2" cy="203.0" r="0.92" fill="#fff" fill-opacity="0.36"/><circle cx="337.2" cy="210.0" r="1.04" fill="#fff" fill-opacity="0.56"/><circle cx="323.5" cy="271.9" r="0.85" fill="#fff" fill-opacity="0.26"/><circle cx="313.1" cy="260.8" r="0.91" fill="#fff" fill-opacity="0.35"/><circle cx="366.0" cy="216.1" r="0.79" fill="#fff" fill-opacity="0.16"/><circle cx="362.6" cy="243.4" r="0.81" fill="#fff" fill-opacity="0.20"/><circle cx="265.7" cy="203.5" r="1.03" fill="#fff" fill-opacity="0.53"/><circle cx="356.1" cy="236.7" r="0.89" fill="#fff" fill-opacity="0.32"/><circle cx="362.6" cy="218.7" r="1.10" fill="#fff" fill-opacity="0.65"/><circle cx="297.7" cy="251.0" r="0.82" fill="#fff" fill-opacity="0.21"/><circle cx="335.9" cy="277.3" r="0.80" fill="#fff" fill-opacity="0.18"/><circle cx="332.1" cy="234.2" r="1.05" fill="#fff" fill-opacity="0.56"/><circle cx="339.9" cy="230.9" r="0.86" fill="#fff" fill-opacity="0.27"/><circle cx="382.7" cy="294.3" r="0.75" fill="#fff" fill-opacity="0.10"/><circle cx="327.9" cy="286.4" r="0.96" fill="#fff" fill-opacity="0.43"/><circle cx="342.7" cy="239.6" r="1.06" fill="#fff" fill-opacity="0.58"/><circle cx="357.3" cy="193.2" r="0.96" fill="#fff" fill-opacity="0.43"/><circle cx="316.6" cy="224.8" r="1.04" fill="#fff" fill-opacity="0.56"/><circle cx="354.2" cy="221.0" r="0.85" fill="#fff" fill-opacity="0.26"/><circle cx="377.5" cy="237.7" r="0.77" fill="#fff" fill-opacity="0.13"/><circle cx="343.9" cy="192.8" r="0.79" fill="#fff" fill-opacity="0.16"/><circle cx="322.3" cy="210.2" r="0.85" fill="#fff" fill-opacity="0.26"/><circle cx="245.4" cy="240.9" r="0.75" fill="#fff" fill-opacity="0.11"/><circle cx="301.6" cy="221.9" r="0.92" fill="#fff" fill-opacity="0.36"/><circle cx="354.7" cy="271.7" r="1.00" fill="#fff" fill-opacity="0.49"/><circle cx="309.2" cy="213.1" r="0.98" fill="#fff" fill-opacity="0.46"/><circle cx="303.4" cy="253.3" r="1.04" fill="#fff" fill-opacity="0.55"/><circle cx="268.7" cy="208.7" r="0.80" fill="#fff" fill-opacity="0.18"/><circle cx="336.4" cy="232.2" r="1.05" fill="#fff" fill-opacity="0.56"/><circle cx="290.5" cy="295.7" r="0.90" fill="#fff" fill-opacity="0.33"/><circle cx="267.6" cy="191.4" r="0.80" fill="#fff" fill-opacity="0.18"/><circle cx="348.2" cy="214.7" r="0.89" fill="#fff" fill-opacity="0.32"/><circle cx="286.5" cy="205.0" r="1.04" fill="#fff" fill-opacity="0.56"/><circle cx="311.6" cy="299.0" r="0.75" fill="#fff" fill-opacity="0.10"/><circle cx="306.2" cy="244.2" r="0.98" fill="#fff" fill-opacity="0.45"/><circle cx="377.3" cy="189.7" r="0.75" fill="#fff" fill-opacity="0.10"/><circle cx="352.8" cy="167.1" r="1.00" fill="#fff" fill-opacity="0.50"/><circle cx="319.6" cy="272.3" r="1.05" fill="#fff" fill-opacity="0.56"/><circle cx="298.9" cy="173.2" r="1.03" fill="#fff" fill-opacity="0.53"/><circle cx="347.5" cy="247.1" r="0.96" fill="#fff" fill-opacity="0.42"/><circle cx="345.1" cy="295.3" r="0.95" fill="#fff" fill-opacity="0.42"/><circle cx="309.5" cy="221.3" r="1.01" fill="#fff" fill-opacity="0.51"/><circle cx="334.0" cy="264.7" r="0.85" fill="#fff" fill-opacity="0.26"/><circle cx="340.1" cy="179.2" r="0.86" fill="#fff" fill-opacity="0.26"/><circle cx="329.9" cy="221.9" r="1.07" fill="#fff" fill-opacity="0.60"/><circle cx="307.6" cy="224.3" r="1.11" fill="#fff" fill-opacity="0.66"/><circle cx="236.9" cy="221.8" r="0.85" fill="#fff" fill-opacity="0.26"/><circle cx="340.3" cy="271.1" r="0.82" fill="#fff" fill-opacity="0.21"/><circle cx="320.0" cy="217.0" r="0.91" fill="#fff" fill-opacity="0.35"/><circle cx="294.2" cy="255.9" r="0.92" fill="#fff" fill-opacity="0.36"/><circle cx="341.0" cy="238.5" r="1.16" fill="#fff" fill-opacity="0.74"/><circle cx="346.6" cy="250.7" r="0.98" fill="#fff" fill-opacity="0.46"/><circle cx="360.2" cy="286.0" r="0.90" fill="#fff" fill-opacity="0.33"/><circle cx="300.0" cy="230.9" r="0.83" fill="#fff" fill-opacity="0.22"/><circle cx="334.2" cy="233.5" r="1.12" fill="#fff" fill-opacity="0.67"/><circle cx="295.2" cy="220.4" r="0.85" fill="#fff" fill-opacity="0.26"/><circle cx="270.8" cy="261.4" r="1.04" fill="#fff" fill-opacity="0.55"/><circle cx="350.2" cy="180.3" r="1.05" fill="#fff" fill-opacity="0.57"/><circle cx="346.1" cy="239.0" r="0.87" fill="#fff" fill-opacity="0.28"/><circle cx="340.8" cy="242.9" r="0.85" fill="#fff" fill-opacity="0.25"/><circle cx="351.3" cy="206.7" r="0.90" fill="#fff" fill-opacity="0.33"/><circle cx="419.2" cy="274.0" r="0.90" fill="#fff" fill-opacity="0.33"/><circle cx="346.0" cy="253.3" r="1.12" fill="#fff" fill-opacity="0.67"/><circle cx="305.7" cy="225.6" r="1.00" fill="#fff" fill-opacity="0.49"/><circle cx="288.6" cy="263.2" r="0.87" fill="#fff" fill-opacity="0.29"/><circle cx="341.8" cy="230.4" r="1.16" fill="#fff" fill-opacity="0.74"/><circle cx="344.6" cy="238.8" r="0.88" fill="#fff" fill-opacity="0.30"/><circle cx="346.6" cy="219.1" r="1.10" fill="#fff" fill-opacity="0.64"/><circle cx="395.5" cy="255.4" r="0.97" fill="#fff" fill-opacity="0.44"/><circle cx="294.4" cy="193.1" r="1.08" fill="#fff" fill-opacity="0.61"/><circle cx="332.0" cy="242.5" r="1.07" fill="#fff" fill-opacity="0.59"/><circle cx="311.0" cy="279.5" r="0.92" fill="#fff" fill-opacity="0.37"/><circle cx="370.9" cy="269.5" r="0.81" fill="#fff" fill-opacity="0.20"/><circle cx="340.6" cy="249.1" r="0.94" fill="#fff" fill-opacity="0.40"/><circle cx="326.6" cy="251.2" r="0.86" fill="#fff" fill-opacity="0.28"/><circle cx="373.0" cy="237.8" r="0.97" fill="#fff" fill-opacity="0.44"/><circle cx="343.4" cy="238.2" r="1.12" fill="#fff" fill-opacity="0.68"/><circle cx="343.4" cy="226.1" r="1.09" fill="#fff" fill-opacity="0.64"/><circle cx="383.4" cy="303.9" r="0.84" fill="#fff" fill-opacity="0.25"/><circle cx="337.5" cy="228.2" r="1.10" fill="#fff" fill-opacity="0.64"/><circle cx="284.2" cy="246.7" r="0.85" fill="#fff" fill-opacity="0.26"/><circle cx="256.3" cy="243.8" r="0.91" fill="#fff" fill-opacity="0.34"/><circle cx="328.2" cy="249.7" r="0.85" fill="#fff" fill-opacity="0.26"/><circle cx="276.5" cy="217.0" r="0.79" fill="#fff" fill-opacity="0.16"/><circle cx="316.8" cy="317.2" r="0.83" fill="#fff" fill-opacity="0.23"/><circle cx="323.2" cy="250.4" r="1.09" fill="#fff" fill-opacity="0.63"/><circle cx="337.8" cy="255.8" r="0.94" fill="#fff" fill-opacity="0.39"/><circle cx="345.3" cy="220.1" r="0.84" fill="#fff" fill-opacity="0.24"/><circle cx="334.0" cy="227.4" r="1.03" fill="#fff" fill-opacity="0.54"/><circle cx="306.3" cy="236.7" r="0.89" fill="#fff" fill-opacity="0.32"/><circle cx="331.8" cy="254.5" r="0.91" fill="#fff" fill-opacity="0.34"/><circle cx="322.1" cy="247.1" r="1.12" fill="#fff" fill-opacity="0.68"/><circle cx="323.8" cy="223.2" r="0.91" fill="#fff" fill-opacity="0.35"/><circle cx="327.8" cy="227.7" r="0.93" fill="#fff" fill-opacity="0.38"/><circle cx="341.2" cy="234.2" r="1.09" fill="#fff" fill-opacity="0.63"/><circle cx="339.4" cy="266.7" r="0.90" fill="#fff" fill-opacity="0.33"/><circle cx="345.9" cy="335.3" r="0.89" fill="#fff" fill-opacity="0.31"/><circle cx="332.1" cy="248.2" r="1.06" fill="#fff" fill-opacity="0.59"/><circle cx="342.3" cy="282.7" r="0.78" fill="#fff" fill-opacity="0.14"/><circle cx="315.4" cy="225.9" r="0.97" fill="#fff" fill-opacity="0.44"/><circle cx="331.5" cy="255.4" r="0.99" fill="#fff" fill-opacity="0.47"/><circle cx="344.7" cy="186.7" r="0.91" fill="#fff" fill-opacity="0.35"/><circle cx="342.7" cy="241.6" r="1.04" fill="#fff" fill-opacity="0.55"/><circle cx="320.3" cy="205.7" r="0.82" fill="#fff" fill-opacity="0.22"/><circle cx="291.2" cy="291.7" r="0.99" fill="#fff" fill-opacity="0.48"/><circle cx="244.0" cy="237.6" r="0.75" fill="#fff" fill-opacity="0.10"/><circle cx="224.3" cy="249.0" r="1.01" fill="#fff" fill-opacity="0.50"/><circle cx="333.9" cy="254.1" r="1.07" fill="#fff" fill-opacity="0.61"/><circle cx="339.2" cy="256.8" r="0.90" fill="#fff" fill-opacity="0.33"/><circle cx="365.8" cy="235.2" r="0.91" fill="#fff" fill-opacity="0.35"/><circle cx="294.8" cy="231.0" r="0.83" fill="#fff" fill-opacity="0.22"/><circle cx="346.5" cy="186.6" r="1.02" fill="#fff" fill-opacity="0.52"/><circle cx="319.5" cy="210.3" r="0.90" fill="#fff" fill-opacity="0.34"/><circle cx="378.0" cy="255.3" r="1.01" fill="#fff" fill-opacity="0.51"/><circle cx="291.9" cy="231.2" r="0.93" fill="#fff" fill-opacity="0.38"/><circle cx="361.4" cy="238.7" r="1.10" fill="#fff" fill-opacity="0.65"/><circle cx="333.6" cy="252.1" r="0.85" fill="#fff" fill-opacity="0.26"/><circle cx="334.0" cy="214.7" r="0.84" fill="#fff" fill-opacity="0.24"/><circle cx="321.2" cy="221.3" r="0.88" fill="#fff" fill-opacity="0.31"/><circle cx="319.7" cy="229.9" r="1.01" fill="#fff" fill-opacity="0.50"/><circle cx="315.0" cy="200.2" r="0.82" fill="#fff" fill-opacity="0.20"/><circle cx="308.3" cy="152.6" r="0.75" fill="#fff" fill-opacity="0.10"/><circle cx="310.5" cy="234.6" r="0.96" fill="#fff" fill-opacity="0.43"/><circle cx="341.6" cy="249.6" r="0.92" fill="#fff" fill-opacity="0.36"/><circle cx="312.3" cy="225.5" r="1.10" fill="#fff" fill-opacity="0.65"/><circle cx="310.9" cy="226.9" r="1.05" fill="#fff" fill-opacity="0.57"/><circle cx="333.2" cy="218.9" r="1.13" fill="#fff" fill-opacity="0.70"/><circle cx="301.0" cy="247.3" r="1.06" fill="#fff" fill-opacity="0.59"/><circle cx="297.2" cy="255.7" r="1.09" fill="#fff" fill-opacity="0.63"/><circle cx="293.3" cy="285.6" r="0.79" fill="#fff" fill-opacity="0.16"/><circle cx="302.3" cy="243.9" r="1.13" fill="#fff" fill-opacity="0.70"/><circle cx="381.6" cy="199.7" r="0.98" fill="#fff" fill-opacity="0.46"/><circle cx="397.3" cy="259.1" r="0.87" fill="#fff" fill-opacity="0.28"/><circle cx="306.8" cy="243.9" r="1.00" fill="#fff" fill-opacity="0.48"/><circle cx="299.4" cy="228.9" r="0.83" fill="#fff" fill-opacity="0.23"/><circle cx="295.3" cy="233.1" r="0.82" fill="#fff" fill-opacity="0.21"/><circle cx="340.9" cy="231.0" r="1.07" fill="#fff" fill-opacity="0.59"/><circle cx="341.3" cy="193.4" r="1.05" fill="#fff" fill-opacity="0.57"/><circle cx="412.4" cy="253.1" r="0.91" fill="#fff" fill-opacity="0.35"/><circle cx="315.9" cy="214.3" r="0.88" fill="#fff" fill-opacity="0.30"/><circle cx="358.0" cy="217.2" r="0.96" fill="#fff" fill-opacity="0.42"/><circle cx="304.5" cy="231.3" r="0.93" fill="#fff" fill-opacity="0.38"/><circle cx="86.7" cy="9.2" r="0.85" fill="#9a9a9a"/><circle cx="108.5" cy="36.6" r="0.85" fill="#9a9a9a"/><circle cx="96.4" cy="70.2" r="0.85" fill="#9a9a9a"/><circle cx="25.9" cy="74.3" r="0.85" fill="#9a9a9a"/><circle cx="33.2" cy="88.9" r="0.85" fill="#9a9a9a"/><circle cx="39.3" cy="89.4" r="0.85" fill="#9a9a9a"/><circle cx="13.0" cy="101.0" r="0.85" fill="#9a9a9a"/><circle cx="36.9" cy="112.0" r="0.85" fill="#9a9a9a"/><circle cx="44.6" cy="109.5" r="0.85" fill="#9a9a9a"/><circle cx="56.3" cy="119.2" r="0.85" fill="#9a9a9a"/><circle cx="74.5" cy="115.1" r="0.85" fill="#9a9a9a"/><circle cx="152.2" cy="54.4" r="0.85" fill="#9a9a9a"/><circle cx="167.5" cy="58.5" r="0.85" fill="#9a9a9a"/><circle cx="204.0" cy="44.0" r="0.85" fill="#9a9a9a"/><circle cx="180.2" cy="70.9" r="0.85" fill="#9a9a9a"/><circle cx="197.2" cy="60.9" r="0.85" fill="#9a9a9a"/><circle cx="143.7" cy="78.7" r="0.85" fill="#9a9a9a"/><circle cx="150.5" cy="80.4" r="0.85" fill="#9a9a9a"/><circle cx="141.3" cy="88.4" r="0.85" fill="#9a9a9a"/><circle cx="138.4" cy="136.2" r="0.85" fill="#9a9a9a"/><circle cx="138.9" cy="143.5" r="0.85" fill="#9a9a9a"/><circle cx="145.0" cy="152.5" r="0.85" fill="#9a9a9a"/><circle cx="148.1" cy="147.7" r="0.85" fill="#9a9a9a"/><circle cx="153.0" cy="134.5" r="0.85" fill="#9a9a9a"/><circle cx="163.2" cy="154.0" r="0.85" fill="#9a9a9a"/><circle cx="85.0" cy="158.1" r="0.85" fill="#9a9a9a"/><circle cx="154.7" cy="159.8" r="0.85" fill="#9a9a9a"/><circle cx="206.9" cy="109.5" r="0.85" fill="#9a9a9a"/><circle cx="309.1" cy="112.0" r="0.85" fill="#9a9a9a"/><circle cx="287.2" cy="89.4" r="0.85" fill="#9a9a9a"/><circle cx="295.5" cy="89.4" r="0.85" fill="#9a9a9a"/><circle cx="316.9" cy="95.0" r="0.85" fill="#9a9a9a"/><circle cx="330.7" cy="93.2" r="0.85" fill="#9a9a9a"/><circle cx="303.5" cy="17.2" r="0.85" fill="#9a9a9a"/><circle cx="280.4" cy="13.1" r="0.85" fill="#9a9a9a"/><circle cx="397.0" cy="18.0" r="0.85" fill="#9a9a9a"/><circle cx="379.5" cy="18.0" r="0.85" fill="#9a9a9a"/><circle cx="245.2" cy="54.4" r="0.85" fill="#9a9a9a"/><circle cx="231.9" cy="105.9" r="0.85" fill="#9a9a9a"/><circle cx="245.2" cy="98.1" r="0.85" fill="#9a9a9a"/><circle cx="225.8" cy="126.5" r="0.85" fill="#9a9a9a"/><circle cx="256.1" cy="147.7" r="0.85" fill="#9a9a9a"/><circle cx="280.4" cy="147.7" r="0.85" fill="#9a9a9a"/><circle cx="369.8" cy="64.1" r="0.85" fill="#9a9a9a"/><circle cx="388.5" cy="86.0" r="0.85" fill="#9a9a9a"/><circle cx="405.5" cy="81.1" r="0.85" fill="#9a9a9a"/><circle cx="411.6" cy="89.4" r="0.85" fill="#9a9a9a"/><circle cx="394.1" cy="113.2" r="0.85" fill="#9a9a9a"/><circle cx="386.1" cy="132.6" r="0.85" fill="#9a9a9a"/><circle cx="369.1" cy="133.8" r="0.85" fill="#9a9a9a"/><circle cx="216.0" cy="30.6" r="0.85" fill="#9a9a9a"/><circle cx="474.2" cy="7.5" r="0.85" fill="#9a9a9a"/><circle cx="484.0" cy="5.8" r="0.85" fill="#9a9a9a"/><circle cx="533.2" cy="7.5" r="0.85" fill="#9a9a9a"/><circle cx="523.5" cy="22.1" r="0.85" fill="#9a9a9a"/><circle cx="444.3" cy="51.2" r="0.85" fill="#9a9a9a"/><circle cx="559.2" cy="43.2" r="0.85" fill="#9a9a9a"/><circle cx="579.9" cy="50.5" r="0.85" fill="#9a9a9a"/><circle cx="564.1" cy="98.6" r="0.85" fill="#9a9a9a"/><circle cx="526.4" cy="109.5" r="0.85" fill="#9a9a9a"/><circle cx="572.6" cy="117.5" r="0.85" fill="#9a9a9a"/><circle cx="611.0" cy="110.7" r="0.85" fill="#9a9a9a"/><circle cx="477.9" cy="122.9" r="0.85" fill="#9a9a9a"/><circle cx="476.6" cy="127.7" r="0.85" fill="#9a9a9a"/><circle cx="458.0" cy="130.2" r="0.85" fill="#9a9a9a"/><circle cx="463.3" cy="143.5" r="0.85" fill="#9a9a9a"/><circle cx="599.3" cy="154.5" r="0.85" fill="#9a9a9a"/><circle cx="422.0" cy="132.1" r="0.85" fill="#9a9a9a"/><circle cx="445.0" cy="79.2" r="0.85" fill="#9a9a9a"/><circle cx="70.9" cy="194.6" r="0.85" fill="#9a9a9a"/><circle cx="100.0" cy="187.3" r="0.85" fill="#9a9a9a"/><circle cx="30.8" cy="221.3" r="0.85" fill="#9a9a9a"/><circle cx="70.4" cy="233.4" r="0.85" fill="#9a9a9a"/><circle cx="115.8" cy="228.6" r="0.85" fill="#9a9a9a"/><circle cx="32.0" cy="274.2" r="0.85" fill="#9a9a9a"/><circle cx="104.4" cy="267.4" r="0.85" fill="#9a9a9a"/><circle cx="132.8" cy="283.2" r="0.85" fill="#9a9a9a"/><circle cx="60.7" cy="311.7" r="0.85" fill="#9a9a9a"/><circle cx="48.5" cy="310.7" r="0.85" fill="#9a9a9a"/><circle cx="128.0" cy="321.4" r="0.85" fill="#9a9a9a"/><circle cx="192.3" cy="173.9" r="0.85" fill="#9a9a9a"/><circle cx="187.5" cy="181.2" r="0.85" fill="#9a9a9a"/><circle cx="192.3" cy="262.1" r="0.85" fill="#9a9a9a"/><circle cx="146.2" cy="271.1" r="0.85" fill="#9a9a9a"/><circle cx="77.0" cy="206.2" r="0.85" fill="#9a9a9a"/><circle cx="485.6" cy="179.5" r="0.85" fill="#9a9a9a"/><circle cx="472.5" cy="186.1" r="0.85" fill="#9a9a9a"/><circle cx="522.8" cy="189.2" r="0.85" fill="#9a9a9a"/><circle cx="436.6" cy="211.6" r="0.85" fill="#9a9a9a"/><circle cx="458.4" cy="215.2" r="0.85" fill="#9a9a9a"/><circle cx="482.7" cy="206.7" r="0.85" fill="#9a9a9a"/><circle cx="515.5" cy="212.8" r="0.85" fill="#9a9a9a"/><circle cx="521.1" cy="228.1" r="0.85" fill="#9a9a9a"/><circle cx="482.2" cy="222.5" r="0.85" fill="#9a9a9a"/><circle cx="615.1" cy="211.6" r="0.85" fill="#9a9a9a"/><circle cx="573.8" cy="249.2" r="0.85" fill="#9a9a9a"/><circle cx="569.0" cy="275.2" r="0.85" fill="#9a9a9a"/><circle cx="583.5" cy="289.3" r="0.85" fill="#9a9a9a"/><circle cx="611.0" cy="289.3" r="0.85" fill="#9a9a9a"/><circle cx="513.8" cy="284.4" r="0.85" fill="#9a9a9a"/><circle cx="527.7" cy="295.4" r="0.85" fill="#9a9a9a"/><circle cx="555.1" cy="313.1" r="0.85" fill="#9a9a9a"/><circle cx="484.0" cy="308.3" r="0.85" fill="#9a9a9a"/><circle cx="53.4" cy="370.7" r="0.85" fill="#9a9a9a"/><circle cx="206.4" cy="357.4" r="0.85" fill="#9a9a9a"/><circle cx="123.1" cy="389.7" r="0.85" fill="#9a9a9a"/><circle cx="172.9" cy="391.4" r="0.85" fill="#9a9a9a"/><circle cx="172.9" cy="412.5" r="0.85" fill="#9a9a9a"/><circle cx="25.9" cy="411.5" r="0.85" fill="#9a9a9a"/><circle cx="58.2" cy="414.9" r="0.85" fill="#9a9a9a"/><circle cx="67.2" cy="416.4" r="0.85" fill="#9a9a9a"/><circle cx="104.9" cy="412.5" r="0.85" fill="#9a9a9a"/><circle cx="115.8" cy="410.8" r="0.85" fill="#9a9a9a"/><circle cx="31.5" cy="438.7" r="0.85" fill="#9a9a9a"/><circle cx="28.4" cy="450.4" r="0.85" fill="#9a9a9a"/><circle cx="68.9" cy="451.4" r="0.85" fill="#9a9a9a"/><circle cx="51.0" cy="457.0" r="0.85" fill="#9a9a9a"/><circle cx="97.1" cy="456.2" r="0.85" fill="#9a9a9a"/><circle cx="120.7" cy="456.2" r="0.85" fill="#9a9a9a"/><circle cx="134.5" cy="436.8" r="0.85" fill="#9a9a9a"/><circle cx="146.2" cy="429.5" r="0.85" fill="#9a9a9a"/><circle cx="146.2" cy="441.2" r="0.85" fill="#9a9a9a"/><circle cx="121.4" cy="446.5" r="0.85" fill="#9a9a9a"/><circle cx="89.1" cy="469.8" r="0.85" fill="#9a9a9a"/><circle cx="101.2" cy="481.2" r="0.85" fill="#9a9a9a"/><circle cx="8.9" cy="478.8" r="0.85" fill="#9a9a9a"/><circle cx="6.5" cy="362.2" r="0.85" fill="#9a9a9a"/><circle cx="318.1" cy="425.4" r="0.85" fill="#9a9a9a"/><circle cx="338.7" cy="365.4" r="0.85" fill="#9a9a9a"/><circle cx="224.1" cy="426.1" r="0.85" fill="#9a9a9a"/><circle cx="233.1" cy="424.6" r="0.85" fill="#9a9a9a"/><circle cx="333.9" cy="337.9" r="0.85" fill="#9a9a9a"/><circle cx="239.1" cy="348.4" r="0.85" fill="#9a9a9a"/><circle cx="241.6" cy="367.8" r="0.85" fill="#9a9a9a"/><circle cx="288.9" cy="398.7" r="0.85" fill="#9a9a9a"/><circle cx="364.2" cy="410.1" r="0.85" fill="#9a9a9a"/><circle cx="401.9" cy="357.4" r="0.85" fill="#9a9a9a"/><circle cx="409.2" cy="341.1" r="0.85" fill="#9a9a9a"/><circle cx="405.5" cy="421.2" r="0.85" fill="#9a9a9a"/><circle cx="386.1" cy="443.6" r="0.85" fill="#9a9a9a"/><circle cx="384.4" cy="367.8" r="0.85" fill="#9a9a9a"/><circle cx="255.7" cy="469.8" r="0.85" fill="#9a9a9a"/><circle cx="212.0" cy="471.5" r="0.85" fill="#9a9a9a"/><circle cx="468.6" cy="392.1" r="0.85" fill="#9a9a9a"/><circle cx="558.0" cy="370.2" r="0.85" fill="#9a9a9a"/><circle cx="562.4" cy="409.6" r="0.85" fill="#9a9a9a"/><circle cx="603.0" cy="429.5" r="0.85" fill="#9a9a9a"/><circle cx="442.6" cy="431.0" r="0.85" fill="#9a9a9a"/><circle cx="484.7" cy="458.6" r="0.85" fill="#9a9a9a"/><circle cx="569.7" cy="461.8" r="0.85" fill="#9a9a9a"/><circle cx="448.2" cy="470.8" r="0.85" fill="#9a9a9a"/><circle cx="501.7" cy="480.5" r="0.85" fill="#9a9a9a"/><circle cx="526.4" cy="329.9" r="0.85" fill="#9a9a9a"/><circle cx="432.9" cy="443.1" r="0.85" fill="#9a9a9a"/><circle cx="64.8" cy="80.4" r="2.1" fill="#808080" fill-opacity="0.3"/><circle cx="64.8" cy="80.4" r="1.3" fill="#fff"/><circle cx="287.2" cy="110.2" r="2.9" fill="#808080" fill-opacity="0.3"/><circle cx="287.2" cy="110.2" r="1.8" fill="#fff"/><circle cx="152.2" cy="233.4" r="2.6" fill="#808080" fill-opacity="0.3"/><circle cx="152.2" cy="233.4" r="1.6" fill="#fff"/><circle cx="469.4" cy="362.2" r="3.5" fill="#808080" fill-opacity="0.3"/><circle cx="469.4" cy="362.2" r="2.2" fill="#fff"/><circle cx="541.7" cy="170.8" r="2.0" fill="#808080" fill-opacity="0.3"/><circle cx="541.7" cy="170.8" r="1.2" fill="#fff"/><circle cx="630.4" cy="64.6" r="1.8" fill="#808080" fill-opacity="0.3"/><circle cx="630.4" cy="64.6" r="1.1" fill="#fff"/><circle cx="333.9" cy="425.4" r="2.0" fill="#808080" fill-opacity="0.3"/><circle cx="333.9" cy="425.4" r="1.2" fill="#fff"/><circle cx="345.5" cy="445.5" r="2.0" fill="#808080" fill-opacity="0.3"/><circle cx="345.5" cy="445.5" r="1.2" fill="#fff"/><circle cx="323.7" cy="124.1" r="1.7" fill="#808080" fill-opacity="0.3"/><circle cx="323.7" cy="124.1" r="1.1" fill="#fff"/><circle cx="341.2" cy="155.7" r="1.6" fill="#808080" fill-opacity="0.3"/><circle cx="341.2" cy="155.7" r="1.0" fill="#fff"/><circle cx="387.3" cy="394.5" r="1.6" fill="#808080" fill-opacity="0.3"/><circle cx="387.3" cy="394.5" r="1.0" fill="#fff"/><circle cx="451.6" cy="229.1" r="1.6" fill="#808080" fill-opacity="0.3"/><circle cx="451.6" cy="229.1" r="1.0" fill="#fff"/><circle cx="246.4" cy="419.3" r="1.6" fill="#808080" fill-opacity="0.3"/><circle cx="246.4" cy="419.3" r="1.0" fill="#fff"/><circle cx="55.8" cy="433.9" r="1.4" fill="#808080" fill-opacity="0.3"/><circle cx="55.8" cy="433.9" r="0.9" fill="#fff"/><circle cx="155.4" cy="435.8" r="1.4" fill="#808080" fill-opacity="0.3"/><circle cx="155.4" cy="435.8" r="0.9" fill="#fff"/><circle cx="67.2" cy="486.1" r="1.6" fill="#808080" fill-opacity="0.3"/><circle cx="67.2" cy="486.1" r="1.0" fill="#fff"/></g><rect x="197.5" y="292.5" width="10.5" height="10.5" fill="#050505" stroke="#d0d0d0" stroke-width="1.1"/><circle cx="201.6" cy="298.5" r="0.9" fill="#b0b0b0"/></svg>
<div class="dlgf" style="left:726px;top:67px;width:306px;height:105px"></div>
<div style="left:729px;top:70px;width:300px;height:12px;background:linear-gradient(to right,#808080,#c0c0c0)"></div>
<span style="left:730.00px;top:70.98px;font-size:9.8px;font-weight:bold;color:#e0e0e0;transform:scaleX(0.986);">Seuils de visualisation</span>
<div class="tbtn" style="left:1018px;top:71px;width:10px;height:10px;border-color:#fff #303030 #303030 #fff"></div>
<svg style="left:1018px;top:71px" width="10" height="10" viewBox="0 0 10 10"><path d="M2.5 2.5L7 7M7 2.5L2.5 7" stroke="#404040" stroke-width="1.2"/></svg>
<div style="left:738px;top:98px;width:239px;height:1px;background:#808080"></div>
<div style="left:738px;top:99px;width:238px;height:1px;background:#404040"></div>
<div style="left:738px;top:100px;width:239px;height:1px;background:#fff"></div>
<div style="left:738px;top:126px;width:239px;height:1px;background:#808080"></div>
<div style="left:738px;top:127px;width:238px;height:1px;background:#404040"></div>
<div style="left:738px;top:128px;width:239px;height:1px;background:#fff"></div>
<div class="raised" style="left:968px;top:91px;width:10px;height:18px"></div>
<div class="raised" style="left:738px;top:119px;width:9px;height:17px"></div>
<div class="sunken" style="left:985px;top:90px;width:39px;height:17px;background:#fff"></div>
<span style="left:989.20px;top:95.30px;font-size:10px;color:#000;transform:scaleX(0.885);">32767</span>
<div class="sunken" style="left:985px;top:118px;width:39px;height:17px;background:#fff"></div>
<span style="left:989.00px;top:123.30px;font-size:10px;color:#000;">0</span>
<div class="raised" style="left:738px;top:144px;width:57px;height:20px"></div>
<span style="left:749.10px;top:148.20px;font-size:10px;color:#000;transform:scaleX(0.878);">Domaine</span>
<div class="raised" style="left:829px;top:144px;width:57px;height:20px"></div>
<span style="left:848.00px;top:148.20px;font-size:10px;color:#000;transform:scaleX(0.925);">Auto</span>
<div class="raised" style="left:940px;top:144px;width:20px;height:20px"></div>
<div class="raised" style="left:961px;top:144px;width:20px;height:20px"></div>
<div class="raised" style="left:983px;top:144px;width:20px;height:20px"></div>
<div class="raised" style="left:1004px;top:144px;width:20px;height:20px"></div>
<div style="left:944px;top:149px;width:12px;height:4px;background:#fff"></div><div style="left:944px;top:153px;width:12px;height:5px;background:#000"></div>
<div style="left:965px;top:149px;width:12px;height:4px;background:#ff0"></div><div style="left:965px;top:153px;width:12px;height:5px;background:#00f"></div>
<div style="left:987px;top:149px;width:12px;height:3px;background:#f00"></div><div style="left:987px;top:152px;width:12px;height:3px;background:#0c0"></div><div style="left:987px;top:155px;width:12px;height:4px;background:#00f"></div>
<svg style="left:1004px;top:144px" width="20" height="20"><path d="M3.5 4H16V16H3.5Z" fill="#fff"/><path d="M3.5 16L16 4V16Z" fill="#000"/></svg>
<div class="dlgf" style="left:620px;top:296px;width:198px;height:187px"></div>
<div style="left:623px;top:298px;width:192px;height:15px;background:linear-gradient(to right,#0a246a,#a6caf0)"></div>
<span style="left:624.80px;top:299.65px;font-size:10.6px;font-weight:bold;color:#fff;transform:scaleX(0.800);">PSF</span>
<div class="raised" style="left:800px;top:300px;width:13px;height:11px"></div>
<svg style="left:800px;top:300px" width="13" height="11" viewBox="0 0 13 11"><path d="M3.5 2.5L9 8M9 2.5L3.5 8" stroke="#000" stroke-width="1.5"/></svg>

<div class="sunken" style="left:648px;top:328px;width:64px;height:17px;background:#d4d0c8"></div>
<div class="sunken" style="left:744px;top:328px;width:64px;height:17px;background:#d4d0c8"></div>
<div class="sunken" style="left:648px;top:356px;width:64px;height:17px;background:#d4d0c8"></div>
<div class="sunken" style="left:744px;top:356px;width:63px;height:17px;background:#d4d0c8"></div>
<div class="sunken" style="left:681px;top:390px;width:50px;height:16px;background:#d4d0c8"></div>
<div class="sunken" style="left:681px;top:417px;width:50px;height:17px;background:#d4d0c8"></div>
<span style="left:629.70px;top:330.10px;font-size:10px;color:#000;transform:scaleX(0.948);">X =</span>
<span style="left:651.50px;top:330.40px;font-size:10px;color:#000;transform:scaleX(0.896);">239.540</span>
<span style="left:724.00px;top:330.10px;font-size:10px;color:#000;transform:scaleX(0.960);">Y =</span>
<span style="left:747.00px;top:330.40px;font-size:10px;color:#000;transform:scaleX(0.896);">228.995</span>
<span style="left:630.00px;top:358.30px;font-size:10px;color:#000;transform:scaleX(1.009);">I =</span>
<span style="left:651.50px;top:358.30px;font-size:10px;color:#000;transform:scaleX(0.896);">99346.7</span>
<span style="left:724.00px;top:358.30px;font-size:10px;color:#000;transform:scaleX(0.948);">B =</span>
<span style="left:746.80px;top:358.30px;font-size:10px;color:#000;transform:scaleX(0.887);">3270.735</span>
<span style="left:630.20px;top:391.60px;font-size:10px;color:#000;transform:scaleX(0.905);">FWHM X =</span>
<span style="left:683.00px;top:391.60px;font-size:10px;color:#000;transform:scaleX(0.823);">1.71</span>
<span style="left:630.20px;top:419.40px;font-size:10px;color:#000;transform:scaleX(0.912);">FWHM Y =</span>
<span style="left:683.00px;top:419.40px;font-size:10px;color:#000;transform:scaleX(0.900);">1.95</span>
<div style="left:693px;top:452px;width:64px;height:20px;border:1px solid #000"></div>
<div class="raised" style="left:694px;top:453px;width:62px;height:18px"></div>
<span style="left:718.70px;top:455.60px;font-size:10px;color:#000;transform:scaleX(0.858);">OK</span>
<div style="left:0;top:635px;width:1080px;height:1px;background:#fff"></div>
<span style="left:1.90px;top:639.48px;font-size:9.8px;color:#000;transform:scaleX(0.890);">Prêt</span>
<div class="thin" style="left:835px;top:638px;width:30px;height:13px"></div>
<span style="left:836.70px;top:639.48px;font-size:9.8px;color:#000;transform:scaleX(0.911);">16 bits</span>
<div class="thin" style="left:867px;top:638px;width:35px;height:13px"></div>
<span style="left:868.20px;top:639.48px;font-size:9.8px;color:#000;transform:scaleX(0.918);">X: 247</span>
<div class="thin" style="left:905px;top:638px;width:36px;height:13px"></div>
<span style="left:906.10px;top:639.48px;font-size:9.8px;color:#000;transform:scaleX(0.936);">Y: 223</span>
<div class="thin" style="left:943px;top:638px;width:121px;height:13px"></div>
<span style="left:944.60px;top:639.48px;font-size:9.8px;color:#000;transform:scaleX(0.957);">I: 3145</span>
<svg style="left:1066px;top:640px" width="13" height="13"><path d="M12 1L1 12M12 5L5 12M12 9L9 12" stroke="#808080" stroke-width="1"/><path d="M12 2L2 12M12 6L6 12M12 10L10 12" stroke="#fff" stroke-width="1"/></svg>
<div style="left:0;top:653px;width:1080px;height:22px;background:#d4d0c8;border-top:1px solid #fff"></div>
<div class="raised" style="left:2px;top:655px;width:66px;height:19px"></div>
<span style="left:18.00px;top:658.22px;font-size:10.2px;font-weight:bold;color:#000;transform:scaleX(1.015);">Démarrer</span>
<svg style="left:3px;top:655px" width="15" height="18"><defs><filter id="fb"><feGaussianBlur stdDeviation="0.35"/></filter></defs><g filter="url(#fb)"><path d="M3 4Q5.5 2 8.5 3.5L7.8 8Q5.5 6.8 2.5 8Z" fill="#f07820"/><path d="M9.5 4Q11.5 5 14 3.8L13.3 8.5Q11 9.5 8.8 8.5Z" fill="#80c040"/><path d="M2 9Q4.5 7.8 7.5 9.2L6.8 13.5Q4.5 12.5 1.5 13.5Z" fill="#2890e0"/><path d="M8.5 9.5Q10.8 10.5 13 9.5L12.3 14.5Q10 15.5 7.8 14.2Z" fill="#f8c020"/></g></svg>
<svg style="left:74px;top:657px" width="15" height="14"><rect x="1" y="2" width="13" height="9" fill="#2868c8" stroke="#8098b8" stroke-width="0.8"/><rect x="2" y="3" width="11" height="5" fill="#48a0f0"/><rect x="3" y="11" width="9" height="1.5" fill="#4070a0"/></svg>
<svg style="left:94px;top:657px" width="14" height="14"><circle cx="7" cy="7" r="6.3" fill="#f07010"/><circle cx="7" cy="7" r="4.2" fill="#f8b020"/><path d="M6 1.5Q10 1 11.5 4Q12 8 9 9Q7 6 6 1.5Z" fill="#2860c0"/><path d="M8 2.5L10 5" stroke="#50d0f0" stroke-width="1"/><path d="M1 6Q1.5 12 7 13Q11 13 12.5 9Q9 12 5.5 10Q3 8 4 4Z" fill="#e05010"/></svg>
<div class="raised" style="left:153px;top:655px;width:130px;height:19px"></div>
<div class="raised" style="left:286px;top:655px;width:130px;height:19px"></div>
<div class="raised" style="left:416px;top:655px;width:132px;height:19px"></div>
<div class="raised" style="left:551px;top:655px;width:129px;height:19px"></div>
<div class="raised" style="left:683px;top:655px;width:130px;height:19px"></div>
<span style="left:173.30px;top:658.58px;font-size:9.8px;color:#000;transform:scaleX(0.920);">Artemis ATK Capture</span>
<span style="left:305.50px;top:658.58px;font-size:9.8px;color:#000;transform:scaleX(0.815);">ASTROSKY</span>
<span style="left:366.50px;top:658.58px;font-size:9.8px;color:#000;">-</span>
<span style="left:388.00px;top:658.58px;font-size:9.8px;color:#000;transform:scaleX(1.029);">LA ...</span>
<span style="left:437.50px;top:658.58px;font-size:9.8px;color:#000;transform:scaleX(0.849);">EQMOD ASCOM DRIVER</span>
<span style="left:570.50px;top:658.58px;font-size:9.8px;color:#000;transform:scaleX(0.929);">Guidemaster_2.0.25</span>
<span style="left:703.00px;top:658.58px;font-size:9.8px;color:#000;transform:scaleX(0.860);">Guide</span>
<svg style="left:157px;top:658px" width="13" height="13"><rect width="13" height="13" fill="#000"/><rect x="1" y="1" width="1" height="1" fill="#aaa"/><rect x="9" y="2" width="2" height="1" fill="#ddd"/><rect x="2" y="10" width="1.5" height="1.5" fill="#eee"/><rect x="8" y="9" width="1" height="1" fill="#999"/><rect x="5" y="6" width="1" height="1" fill="#777"/></svg>
<svg style="left:289px;top:658px" width="13" height="14"><rect x="0" y="0" width="13" height="13.5" fill="#f8f4f8"/><path d="M1.5 12.5L8.5 4.5" stroke="#10806a" stroke-width="2.6" stroke-linecap="round"/><rect x="4" y="0" width="1" height="1" fill="#606060"/><rect x="7" y="2" width="1" height="1" fill="#606060"/><rect x="6" y="11" width="1" height="1" fill="#606060"/><rect x="10" y="11" width="1" height="1" fill="#606060"/><rect x="8.5" y="7" width="1.5" height="1" fill="#7070c0"/></svg>
<svg style="left:422px;top:659px" width="12" height="12"><path d="M1.5 1.5H4.5L5.5 2.5H9.5V9.5H1.5Z" fill="#fff" stroke="#101010" stroke-width="1"/><rect x="2" y="2.5" width="7.5" height="1.5" fill="#108060"/></svg>
<div style="left:554px;top:658px;width:13px;height:13px;background:#000"></div><div style="left:557px;top:661px;width:2px;height:2px;background:#ff0"></div>
<svg style="left:689px;top:659px" width="12" height="12"><path d="M1.5 1.5H4.5L5.5 2.5H9.5V9.5H1.5Z" fill="#fff" stroke="#101010" stroke-width="1"/><rect x="2" y="2.5" width="7.5" height="1.5" fill="#108060"/></svg>
<div style="left:815px;top:655px;width:129px;height:19px;background:#e6e4df;border:1px solid;border-color:#404040 #fff #fff #404040;box-shadow:inset 1px 1px 0 #808080"></div>
<div style="left:820px;top:658px;width:13px;height:13px;background:#008080"></div><div style="left:822px;top:660px;width:9px;height:9px;background:#fff"></div><div style="left:823px;top:660px;width:7px;height:6px;background:#f00"></div>
<span style="left:836.50px;top:659.77px;font-size:9.6px;font-weight:bold;color:#000;transform:scaleX(1.051);">Iris - Version 5.57 - c...</span>
<span style="left:955.00px;top:658.94px;font-size:10.5px;color:#000;transform:scaleX(0.785);">FR</span>
<div style="left:971px;top:655px;width:1px;height:19px;background:#808080"></div><div style="left:972px;top:655px;width:1px;height:19px;background:#fff"></div>
<div class="thin" style="left:975px;top:655px;width:104px;height:19px"></div>
<span style="left:979.50px;top:658.34px;font-size:10.5px;font-weight:bold;color:#000;transform:scaleX(1.115);">«</span>
<svg style="left:997px;top:656px" width="48" height="17"><rect x="2" y="2" width="6" height="3" fill="#c8c060" stroke="#606020" stroke-width="0.7"/><path d="M2.5 5H7.5L6.5 10H3.5Z" fill="#f8f8f8" stroke="#808080" stroke-width="0.7"/><rect x="4" y="10" width="2" height="4" fill="#d0d0d0"/><rect x="8" y="3" width="5" height="11" rx="1" fill="#505050"/><path d="M7 9L13 15M13 9L7 15" stroke="#f00000" stroke-width="2.2"/><rect x="17" y="2.5" width="11" height="11" rx="2" fill="#e8e8e8" stroke="#707070" stroke-width="0.9"/><rect x="19" y="5.5" width="7" height="5" fill="#202020"/><path d="M22 9L28 15M28 9L22 15" stroke="#f00000" stroke-width="2.2"/><path d="M32 6H34.5L38.5 2.5V14.5L34.5 11H32Z" fill="#e4e4e4" stroke="#808080" stroke-width="0.8"/><path d="M40 5.5Q42.2 8.5 40 11.5M42.8 3.5Q46 8.5 42.8 13.5" stroke="#30905a" fill="none" stroke-width="1.1"/><path d="M38.5 8.5H40.5" stroke="#30905a" stroke-width="1"/></svg>
<span style="left:1048.00px;top:658.98px;font-size:9.8px;color:#000;transform:scaleX(0.949);">23:02</span>
</body></html>
